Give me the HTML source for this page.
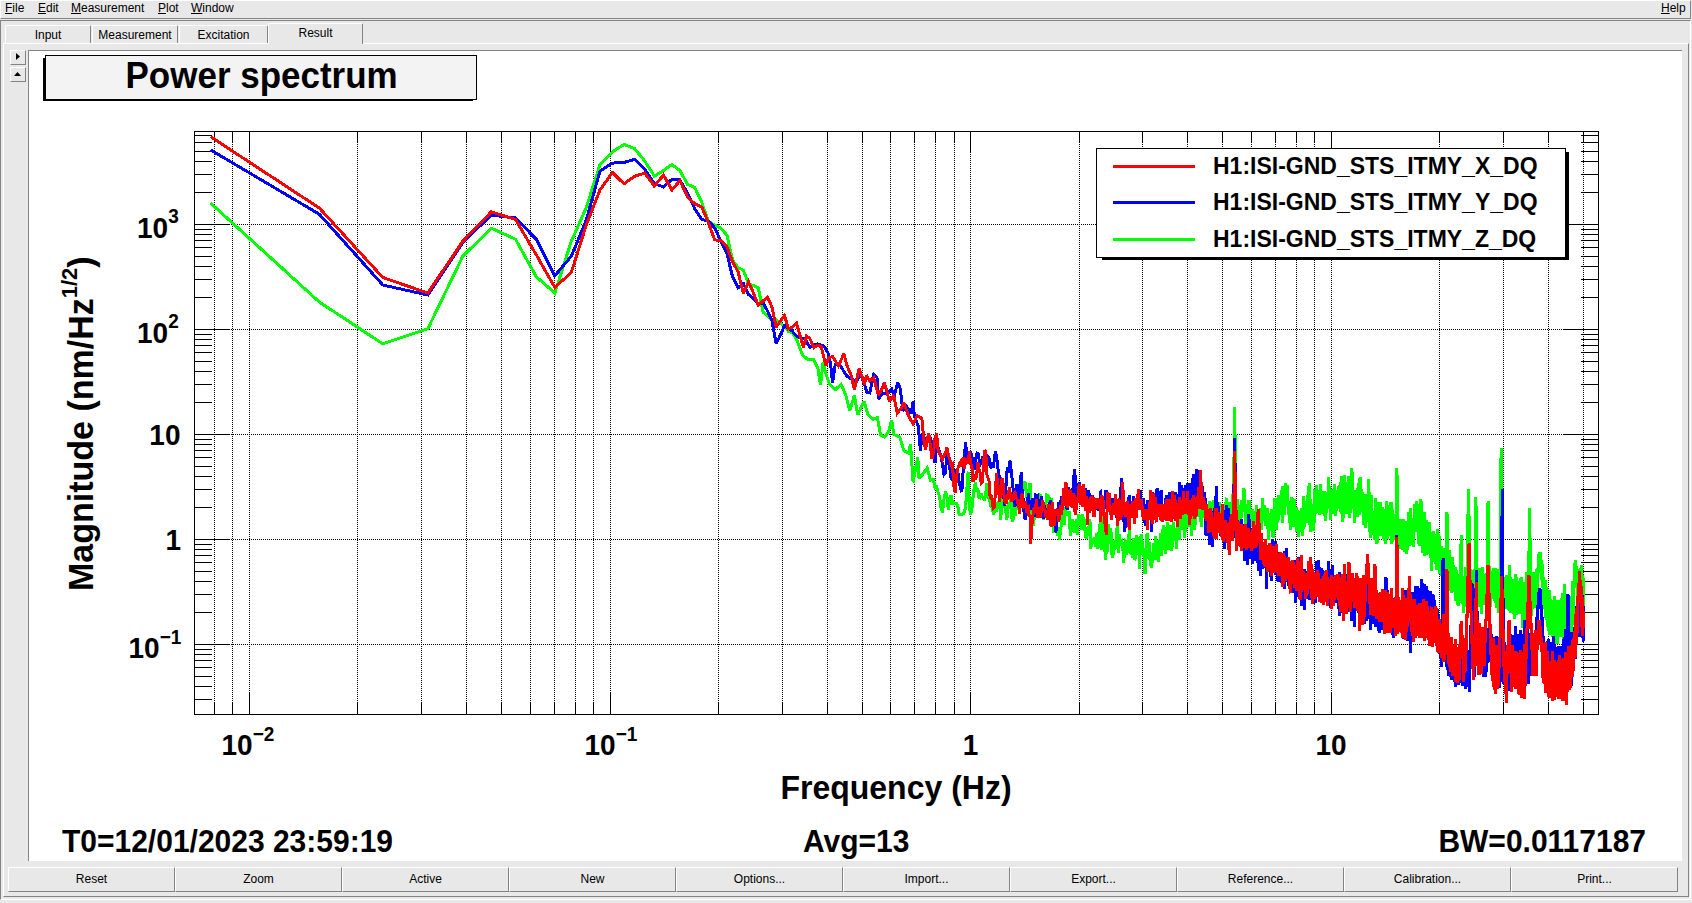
<!DOCTYPE html>
<html><head><meta charset="utf-8"><title>diaggui - Power spectrum</title>
<style>
html,body{margin:0;padding:0;}
body{width:1692px;height:903px;position:relative;overflow:hidden;background:#e8e8e8;font-family:"Liberation Sans",sans-serif;font-size:12px;color:#000;}
.abs{position:absolute;box-sizing:border-box;}
.raised{border-top:1px solid #ffffff;border-left:1px solid #ffffff;border-bottom:1px solid #848484;border-right:1px solid #848484;}
.sunken{border-top:1px solid #848484;border-left:1px solid #848484;border-bottom:1px solid #ffffff;border-right:1px solid #ffffff;}
.menu span{position:absolute;top:0px;line-height:14px;white-space:pre;}
.menu u{text-decoration:underline;text-underline-offset:0.6px;text-decoration-thickness:1px;}
.tab{position:absolute;box-sizing:border-box;border-top:1px solid #ffffff;border-left:1px solid #ffffff;border-right:1px solid #848484;text-align:center;white-space:pre;border-radius:2px 2px 0 0;}
.btn{position:absolute;box-sizing:border-box;top:867px;height:25px;width:167px;text-align:center;line-height:23px;white-space:pre;}
svg text{font-family:"Liberation Sans",sans-serif;font-weight:bold;fill:#000;}
</style></head>
<body>
<div class="abs raised menu" style="left:0;top:0;width:1691px;height:19px;"><span style="left:4px"><u>F</u>ile</span><span style="left:37px"><u>E</u>dit</span><span style="left:70px"><u>M</u>easurement</span><span style="left:157px"><u>P</u>lot</span><span style="left:190px"><u>W</u>indow</span><span style="left:1660px"><u>H</u>elp</span></div>
<div class="abs sunken" style="left:0;top:20px;width:1691px;height:880px;"></div>
<div class="abs raised" style="left:3px;top:43px;width:1686px;height:854px;"></div>
<div class="tab" style="left:5px;top:25px;width:86px;height:18px;line-height:19px;">Input</div><div class="tab" style="left:92px;top:25px;width:86px;height:18px;line-height:19px;">Measurement</div><div class="tab" style="left:179px;top:25px;width:89px;height:18px;line-height:19px;">Excitation</div><div class="tab" style="left:268px;top:23px;width:95px;height:21px;line-height:19px;background:#e8e8e8;">Result</div>
<div class="abs raised" style="left:10px;top:50px;width:16px;height:15px;"><svg width="14" height="12" style="position:absolute;left:0;top:0"><path d="M5 2v7l4-3.5z" fill="#000"/></svg></div>
<div class="abs raised" style="left:10px;top:67px;width:16px;height:15px;"><svg width="14" height="12" style="position:absolute;left:0;top:0"><path d="M3 8h7l-3.5-4z" fill="#000"/></svg></div>
<div class="abs" style="left:28px;top:50px;width:1654px;height:811px;background:#fff;border-top:1px solid #848484;border-left:1px solid #848484;"></div>
<div class="btn raised" style="left:8px">Reset</div><div class="btn raised" style="left:175px">Zoom</div><div class="btn raised" style="left:342px">Active</div><div class="btn raised" style="left:509px">New</div><div class="btn raised" style="left:676px">Options...</div><div class="btn raised" style="left:843px">Import...</div><div class="btn raised" style="left:1010px">Export...</div><div class="btn raised" style="left:1177px">Reference...</div><div class="btn raised" style="left:1344px">Calibration...</div><div class="btn raised" style="left:1511px">Print...</div>
<svg class="abs" style="left:0;top:0" width="1692" height="903" viewBox="0 0 1692 903">
<g shape-rendering="crispEdges">
<rect x="43" y="58" width="430" height="43" fill="#000"/><rect x="45.5" y="55.5" width="431" height="44" fill="#f3f3f3" stroke="#000" stroke-width="1"/>
<path d="M214.5 132V714M232.5 132V714M249.5 132V714M357.5 132V714M421.5 132V714M466.5 132V714M501.5 132V714M530.5 132V714M554.5 132V714M575.5 132V714M593.5 132V714M610.5 132V714M718.5 132V714M782.5 132V714M827.5 132V714M862.5 132V714M890.5 132V714M914.5 132V714M935.5 132V714M954.5 132V714M970.5 132V714M1079.5 132V714M1142.5 132V714M1187.5 132V714M1222.5 132V714M1251.5 132V714M1275.5 132V714M1296.5 132V714M1314.5 132V714M1331.5 132V714M1439.5 132V714M1503.5 132V714M1548.5 132V714M1583.5 132V714M195 644.5H1598M195 539.5H1598M195 434.5H1598M195 329.5H1598M195 224.5H1598" stroke="#000" stroke-width="1" stroke-dasharray="1 1" fill="none"/>
<path d="M214.5 714v-11M214.5 132v11M232.5 714v-11M232.5 132v11M249.5 714v-21M249.5 132v21M357.5 714v-11M357.5 132v11M421.5 714v-11M421.5 132v11M466.5 714v-11M466.5 132v11M501.5 714v-11M501.5 132v11M530.5 714v-11M530.5 132v11M554.5 714v-11M554.5 132v11M575.5 714v-11M575.5 132v11M593.5 714v-11M593.5 132v11M610.5 714v-21M610.5 132v21M718.5 714v-11M718.5 132v11M782.5 714v-11M782.5 132v11M827.5 714v-11M827.5 132v11M862.5 714v-11M862.5 132v11M890.5 714v-11M890.5 132v11M914.5 714v-11M914.5 132v11M935.5 714v-11M935.5 132v11M954.5 714v-11M954.5 132v11M970.5 714v-21M970.5 132v21M1079.5 714v-11M1079.5 132v11M1142.5 714v-11M1142.5 132v11M1187.5 714v-11M1187.5 132v11M1222.5 714v-11M1222.5 132v11M1251.5 714v-11M1251.5 132v11M1275.5 714v-11M1275.5 132v11M1296.5 714v-11M1296.5 132v11M1314.5 714v-11M1314.5 132v11M1331.5 714v-21M1331.5 132v21M1439.5 714v-11M1439.5 132v11M1503.5 714v-11M1503.5 132v11M1548.5 714v-11M1548.5 132v11M1583.5 714v-11M1583.5 132v11M195 699.5h17M1598 699.5h-17M195 686.5h17M1598 686.5h-17M195 676.5h17M1598 676.5h-17M195 667.5h17M1598 667.5h-17M195 660.5h17M1598 660.5h-17M195 654.5h17M1598 654.5h-17M195 649.5h17M1598 649.5h-17M195 644.5h35M1598 644.5h-35M195 612.5h17M1598 612.5h-17M195 594.5h17M1598 594.5h-17M195 581.5h17M1598 581.5h-17M195 571.5h17M1598 571.5h-17M195 562.5h17M1598 562.5h-17M195 555.5h17M1598 555.5h-17M195 549.5h17M1598 549.5h-17M195 544.5h17M1598 544.5h-17M195 539.5h35M1598 539.5h-35M195 507.5h17M1598 507.5h-17M195 489.5h17M1598 489.5h-17M195 476.5h17M1598 476.5h-17M195 466.5h17M1598 466.5h-17M195 457.5h17M1598 457.5h-17M195 450.5h17M1598 450.5h-17M195 444.5h17M1598 444.5h-17M195 439.5h17M1598 439.5h-17M195 434.5h35M1598 434.5h-35M195 402.5h17M1598 402.5h-17M195 384.5h17M1598 384.5h-17M195 371.5h17M1598 371.5h-17M195 361.5h17M1598 361.5h-17M195 352.5h17M1598 352.5h-17M195 345.5h17M1598 345.5h-17M195 339.5h17M1598 339.5h-17M195 334.5h17M1598 334.5h-17M195 329.5h35M1598 329.5h-35M195 297.5h17M1598 297.5h-17M195 279.5h17M1598 279.5h-17M195 266.5h17M1598 266.5h-17M195 256.5h17M1598 256.5h-17M195 247.5h17M1598 247.5h-17M195 240.5h17M1598 240.5h-17M195 234.5h17M1598 234.5h-17M195 229.5h17M1598 229.5h-17M195 224.5h35M1598 224.5h-35M195 192.5h17M1598 192.5h-17M195 174.5h17M1598 174.5h-17M195 161.5h17M1598 161.5h-17M195 151.5h17M1598 151.5h-17M195 142.5h17M1598 142.5h-17M195 135.5h17M1598 135.5h-17" stroke="#000" stroke-width="1" fill="none"/>
<rect x="194.5" y="131.5" width="1404" height="583" fill="none" stroke="#000" stroke-width="1"/>
<polyline points="210.7,203.2 319.3,302.0 382.8,343.8 427.8,328.8 462.8,256.2 491.3,228.2 515.5,239.2 536.4,276.8 554.8,293.0 571.3,241.2 586.3,207.5 599.9,165.0 612.4,151.9 624.0,144.4 634.8,148.8 644.9,161.2 654.4,176.2 663.4,170.6 671.9,164.4 679.9,170.6 687.5,184.4 694.8,187.5 701.8,202.5 708.4,221.5 714.8,225.0 721.0,228.4 726.9,235.1 732.6,260.2 738.1,267.7 743.4,270.2 748.5,283.6 753.5,285.5 758.3,287.8 763.0,312.0 767.5,316.0 771.9,319.6 776.2,319.6 780.4,323.0 784.5,327.0 788.4,331.3 792.3,333.0 796.6,339.2 802.6,355.2 807.3,359.1 813.9,359.8 817.9,368.4 820.5,385.0 823.2,361.8 825.9,373.7 829.2,383.7 835.2,389.7 841.1,384.4 845.8,395.0 849.8,410.9 854.4,395.0 857.7,414.9 864.0,401.3 868.0,414.6 873.3,419.3 877.3,417.3 880.6,435.2 884.6,437.2 888.6,431.9 891.6,419.9 893.9,434.5 899.8,437.2 903.8,450.5 908.5,453.1 910.5,443.8 913.1,482.3 917.8,457.1 919.0,478.4 920.6,476.4 922.2,474.9 923.9,472.2 925.5,470.4 927.2,467.8 928.8,473.7 930.4,480.1 931.9,479.9 933.5,479.7 935.0,488.0 936.6,487.1 938.1,492.1 939.6,496.8 941.1,508.2 942.5,512.7 944.0,499.0 945.4,491.8 946.9,495.4 948.3,510.0 949.7,499.6 951.1,495.1 952.5,503.3 953.8,502.8 955.2,503.5 956.5,503.5 957.9,506.9 959.2,514.5 960.5,514.4 961.8,514.4 963.1,514.0 964.4,511.7 965.6,507.4 966.9,488.8 968.1,471.6 969.4,506.2 970.6,514.4 971.8,510.0 973.0,497.7 974.2,487.6 975.4,482.2 976.6,491.7 977.8,488.5 978.9,497.3 980.1,497.9 981.2,493.5 982.4,497.0 983.5,498.2 984.6,500.6 985.7,494.5 986.9,483.2 988.0,497.4 989.0,497.4 990.1,502.3 991.2,508.0 992.3,503.5 993.3,514.9 994.4,511.6 995.4,506.7 996.5,511.3 997.5,503.7 998.5,502.2 999.6,501.2 1000.6,519.5 1001.6,508.4 1002.6,497.7 1003.6,504.1 1004.6,506.5 1005.5,506.7 1006.5,519.7 1007.5,516.3 1008.5,502.7 1009.4,506.4 1010.4,498.9 1011.3,512.5 1012.3,521.3 1013.2,519.5 1014.1,499.6 1015.0,516.1 1016.0,507.5 1016.9,509.9 1017.8,500.8 1018.7,504.9 1019.6,507.7 1020.5,502.9 1021.4,503.7 1022.2,495.5 1023.1,489.8 1024.0,485.4 1024.9,481.3 1025.7,488.9 1026.6,491.0 1027.4,503.7 1028.3,498.3 1029.1,500.8 1030.0,482.8 1030.8,500.8 1031.6,510.5 1032.5,520.3 1033.3,525.5 1034.1,517.9 1034.9,519.2 1035.7,504.7 1036.5,501.3 1037.3,510.9 1038.1,509.1 1038.9,508.6 1039.7,494.9 1040.5,495.3 1041.3,499.6 1042.0,499.7 1042.8,509.9 1043.6,520.1 1044.4,506.9 1045.1,513.1 1045.9,504.5 1046.6,494.8 1047.4,495.2 1048.1,497.6 1048.9,494.8 1049.6,510.0 1050.4,515.2 1051.1,498.6 1051.8,505.5 1052.5,509.1 1053.3,528.1 1054.0,532.4 1054.7,525.0 1055.4,520.3 1056.1,517.0 1056.8,523.0 1057.5,535.9 1058.2,531.9 1058.9,531.0 1059.6,539.8 1060.3,531.2 1061.0,527.0 1061.7,517.9 1062.4,510.1 1063.1,519.5 1063.7,521.6 1064.4,525.1 1065.1,509.4 1065.7,507.3 1066.4,515.8 1067.1,512.5 1067.7,513.1 1068.4,515.2 1069.0,510.9 1069.7,520.8 1070.3,535.7 1071.0,525.7 1071.6,520.3 1072.3,522.4 1072.9,519.6 1073.5,528.8 1074.2,532.9 1074.8,523.1 1075.4,523.2 1076.1,527.0 1076.7,519.3 1077.3,534.8 1077.9,523.2 1078.5,514.6 1079.2,525.9 1079.8,520.2 1080.4,515.4 1081.0,519.3 1081.6,528.4 1082.2,528.5 1082.8,514.4 1083.4,521.1 1084.0,518.7 1084.6,524.9 1085.2,533.7 1085.7,536.1 1086.3,538.6 1086.9,526.9 1087.5,532.0 1088.1,536.0 1088.6,528.9 1089.2,524.3 1089.8,519.4 1090.4,526.9 1090.9,548.8 1091.5,538.9 1092.1,540.2 1092.6,542.2 1093.2,539.3 1093.7,542.5 1094.3,542.8 1094.9,537.1 1095.4,546.9 1096.0,540.7 1096.5,533.3 1097.1,535.7 1097.6,547.7 1098.1,548.4 1098.7,533.4 1099.2,533.5 1099.8,525.9 1100.3,522.6 1100.8,531.5 1101.4,541.9 1101.9,549.9 1102.4,531.1 1102.9,522.0 1103.5,516.6 1104.0,525.6 1104.5,543.8 1105.0,551.5 1105.5,559.8 1106.1,553.3 1106.6,544.6 1107.1,550.4 1107.6,551.7 1108.1,528.6 1108.6,524.3 1109.1,542.3 1109.6,543.6 1110.1,528.3 1110.6,532.9 1111.1,533.3 1111.6,546.4 1112.1,557.4 1112.6,556.7 1113.1,554.9 1113.6,541.8 1114.1,539.9 1114.6,549.5 1115.1,541.9 1115.6,545.2 1116.0,547.2 1116.5,532.1 1117.1,527.2 1117.3,527.2 1117.7,549.2 1117.9,548.4 1118.4,552.4 1118.9,547.0 1119.4,533.7 1119.9,542.3 1120.3,540.6 1120.8,540.7 1121.3,540.4 1121.7,544.9 1122.2,546.4 1122.7,541.6 1123.1,553.8 1123.6,562.7 1124.1,552.6 1124.3,557.5 1124.7,547.7 1124.9,547.7 1125.4,540.9 1125.9,541.4 1126.3,554.6 1126.8,546.6 1127.2,542.4 1127.7,552.9 1128.1,547.6 1128.6,544.7 1129.1,531.7 1129.3,531.7 1129.7,544.0 1129.9,544.0 1130.4,552.5 1130.8,553.5 1131.2,549.2 1131.7,546.7 1132.1,556.7 1132.3,556.7 1132.7,542.3 1132.9,542.3 1133.4,537.7 1133.8,553.7 1134.3,560.2 1134.7,558.6 1135.1,548.8 1135.3,548.8 1135.7,558.8 1135.9,550.9 1136.4,534.8 1136.8,545.4 1137.3,547.6 1137.7,551.5 1138.1,540.9 1138.3,537.2 1138.7,550.7 1138.9,550.7 1139.4,568.9 1139.8,552.0 1140.2,543.6 1140.6,539.5 1141.1,535.3 1141.3,535.3 1141.7,553.0 1141.9,553.0 1142.2,541.7 1142.6,543.5 1143.1,549.2 1143.3,549.2 1143.7,556.6 1143.9,553.2 1144.3,554.9 1144.7,572.6 1145.1,572.8 1145.3,572.8 1145.7,549.3 1145.9,549.3 1146.3,548.9 1146.7,535.4 1147.1,534.5 1147.3,534.5 1147.7,553.9 1147.9,553.9 1148.3,558.4 1148.7,551.0 1149.1,543.3 1149.3,543.3 1149.7,556.1 1149.9,556.1 1150.1,562.3 1150.3,562.3 1150.7,565.6 1150.9,564.9 1151.4,567.9 1151.8,561.9 1152.1,558.2 1152.3,563.1 1152.7,555.4 1152.9,555.4 1153.3,543.1 1153.7,556.9 1154.1,557.0 1154.3,557.0 1154.7,547.8 1154.9,554.1 1155.1,548.4 1155.3,559.7 1155.7,537.9 1155.9,537.9 1156.3,546.8 1156.7,544.6 1157.1,546.8 1157.3,546.8 1157.7,558.2 1157.9,558.2 1158.1,560.1 1158.3,560.1 1158.7,541.8 1158.9,541.8 1159.3,542.9 1159.6,544.5 1160.1,542.1 1160.3,532.8 1160.7,551.8 1160.9,551.8 1161.1,554.3 1161.3,554.3 1161.7,549.1 1161.9,549.1 1162.1,537.8 1162.3,537.8 1162.7,532.7 1162.9,532.7 1163.1,526.9 1163.3,526.9 1163.7,537.8 1163.9,537.8 1164.3,540.5 1164.7,540.6 1165.1,552.7 1165.3,552.7 1165.7,540.0 1165.9,540.8 1166.1,538.5 1166.3,538.5 1166.7,528.3 1166.9,533.8 1167.1,523.2 1167.3,523.2 1167.7,529.5 1167.9,529.5 1168.1,532.4 1168.3,532.4 1168.7,548.6 1168.9,548.6 1169.1,542.4 1169.3,542.4 1169.7,530.4 1169.9,530.4 1170.1,526.7 1170.3,526.7 1170.7,531.3 1170.9,526.8 1171.1,535.3 1171.3,535.3 1171.7,549.0 1171.9,549.0 1172.1,544.7 1172.3,544.7 1172.7,528.5 1172.9,535.4 1173.1,534.6 1173.3,534.6 1173.7,523.1 1173.9,523.1 1174.1,532.8 1174.3,532.8 1174.7,541.3 1174.9,533.8 1175.1,532.6 1175.3,541.2 1175.7,531.6 1175.9,531.6 1176.1,532.7 1176.3,532.7 1176.7,547.6 1176.9,547.6 1177.1,532.7 1177.3,532.7 1177.7,521.3 1177.9,521.3 1178.1,518.7 1178.3,518.7 1178.7,535.4 1178.9,535.4 1179.1,538.4 1179.3,538.4 1179.7,522.2 1179.9,522.9 1180.1,527.7 1180.3,527.7 1180.7,516.4 1180.9,516.4 1181.1,509.2 1181.3,507.9 1181.7,521.7 1181.9,521.7 1182.1,526.4 1182.3,525.7 1182.7,528.0 1182.9,528.0 1183.1,521.7 1183.3,507.9 1183.7,527.7 1183.9,527.7 1184.1,518.9 1184.3,518.9 1184.7,536.4 1184.9,536.4 1185.1,528.0 1185.3,528.0 1185.7,525.1 1185.9,525.1 1186.1,526.0 1186.3,526.0 1186.7,509.1 1186.9,509.1 1187.1,512.6 1187.3,507.6 1187.7,520.5 1187.9,520.5 1188.1,524.8 1188.3,526.8 1188.7,508.5 1188.9,508.5 1189.1,517.8 1189.3,517.8 1189.7,513.0 1189.9,513.0 1190.1,508.5 1190.3,508.5 1190.7,521.7 1190.9,521.7 1191.1,519.1 1191.3,519.1 1191.7,535.8 1191.9,531.3 1192.1,523.4 1192.3,524.9 1192.7,512.1 1192.9,512.1 1193.1,509.1 1193.3,509.1 1193.7,523.1 1193.9,523.1 1194.1,528.9 1194.3,528.9 1194.7,512.2 1194.9,521.2 1195.1,523.5 1195.3,523.5 1195.7,512.0 1195.9,512.0 1196.1,507.5 1196.3,511.5 1196.7,505.7 1196.9,505.7 1197.1,515.0 1197.3,515.0 1197.7,502.1 1197.9,502.1 1198.1,514.5 1198.3,514.5 1198.7,503.4 1198.9,506.4 1199.1,506.6 1199.3,506.6 1199.7,503.2 1199.9,503.2 1200.1,512.4 1200.3,512.4 1200.7,520.9 1200.9,520.9 1201.1,521.8 1201.3,526.9 1201.7,519.2 1201.9,519.2 1202.1,512.0 1202.3,516.2 1202.7,502.9 1202.9,502.9 1203.1,506.5 1203.3,506.5 1203.7,516.1 1203.9,516.1 1204.1,505.8 1204.3,505.8 1204.7,511.9 1204.9,509.4 1205.1,504.2 1205.3,504.2 1205.7,530.2 1205.9,530.2 1206.1,524.3 1206.3,517.5 1206.7,527.5 1206.9,518.7 1207.1,515.5 1207.3,515.5 1207.7,522.1 1207.9,519.0 1208.1,513.0 1208.3,513.0 1208.7,507.5 1208.9,507.5 1209.1,504.0 1209.3,506.5 1209.7,502.0 1209.9,502.0 1210.1,507.1 1210.3,507.1 1210.7,524.8 1210.9,516.3 1211.1,507.7 1211.3,507.7 1211.7,516.2 1211.9,516.2 1212.1,520.9 1212.3,520.9 1212.7,502.2 1212.9,504.6 1213.1,512.4 1213.3,522.1 1213.7,501.3 1213.9,501.3 1214.1,505.7 1214.3,511.4 1214.7,503.5 1214.9,503.6 1215.1,499.3 1215.3,499.3 1215.7,528.4 1215.9,528.4 1216.1,513.1 1216.3,513.1 1216.7,526.3 1216.9,525.4 1217.1,522.6 1217.3,522.6 1217.7,506.2 1217.9,506.2 1218.1,511.8 1218.3,511.8 1218.7,522.3 1218.9,522.3 1219.1,522.7 1219.3,522.7 1219.7,503.6 1219.9,503.6 1220.1,508.6 1220.3,516.6 1220.7,505.1 1220.9,505.1 1221.1,509.6 1221.3,508.2 1221.7,521.7 1221.9,520.9 1222.1,515.8 1222.3,515.8 1222.7,522.8 1222.9,522.8 1223.1,514.8 1223.3,514.8 1223.7,523.6 1223.9,515.0 1224.1,509.6 1224.3,509.6 1224.7,518.4 1224.9,515.0 1225.1,516.6 1225.3,527.2 1225.7,505.6 1225.9,505.6 1226.1,499.8 1226.3,497.6 1226.7,515.1 1226.9,505.4 1227.1,503.7 1227.3,503.7 1227.7,529.1 1227.9,529.1 1228.1,529.7 1228.3,529.7 1228.7,513.9 1228.9,513.9 1229.1,503.7 1229.3,523.5 1229.7,503.3 1229.9,503.3 1230.1,508.4 1230.3,508.4 1230.7,523.5 1230.9,523.5 1231.1,520.0 1231.3,520.0 1231.7,509.2 1231.9,509.2 1232.1,498.9 1232.3,494.3 1232.7,515.1 1232.9,515.1 1233.1,518.2 1233.3,518.2 1233.7,467.4 1233.9,467.4 1234.1,450.5 1234.3,450.5 1234.7,407.3 1234.9,423.1 1235.1,443.7 1235.3,443.7 1235.7,501.0 1235.9,501.0 1236.1,533.8 1236.3,533.8 1236.7,505.1 1236.9,517.4 1237.1,513.6 1237.3,498.8 1237.7,515.1 1237.9,515.1 1238.1,520.9 1238.3,522.4 1238.7,507.8 1238.9,521.8 1239.1,506.1 1239.3,506.1 1239.7,518.6 1239.9,514.6 1240.1,522.0 1240.3,522.8 1240.7,512.1 1240.9,512.1 1241.1,501.9 1241.3,501.9 1241.7,518.4 1241.9,512.2 1242.1,505.2 1242.3,504.5 1242.7,512.1 1242.9,507.0 1243.1,506.8 1243.3,506.8 1243.7,489.0 1243.9,489.0 1244.1,490.9 1244.3,490.9 1244.7,505.7 1244.9,505.7 1245.1,508.8 1245.3,508.0 1245.7,522.5 1245.9,522.5 1246.1,521.5 1246.3,524.3 1246.7,504.2 1246.9,514.3 1247.1,531.2 1247.3,531.2 1247.7,515.4 1247.9,521.2 1248.1,520.9 1248.3,524.8 1248.7,501.0 1248.9,501.0 1249.1,505.8 1249.3,499.9 1249.7,520.2 1249.9,520.2 1250.1,521.7 1250.3,521.7 1250.7,510.7 1250.9,513.0 1251.1,517.1 1251.3,513.8 1251.7,521.4 1251.9,517.2 1252.1,510.8 1252.3,510.8 1252.7,527.1 1252.9,514.2 1253.1,521.4 1253.3,520.3 1253.7,523.4 1253.9,523.4 1254.1,515.1 1254.3,510.8 1254.7,529.4 1254.9,529.4 1255.1,528.2 1255.3,528.2 1255.7,512.2 1255.9,517.5 1256.1,512.8 1256.3,505.2 1256.7,515.6 1256.9,515.6 1257.1,519.5 1257.3,537.7 1257.7,516.2 1257.9,516.2 1258.1,521.6 1258.3,523.8 1258.7,510.5 1258.9,510.9 1259.1,534.7 1259.3,534.7 1259.7,510.9 1259.9,510.9 1260.1,514.7 1260.3,507.9 1260.7,525.4 1260.9,525.4 1261.1,528.1 1261.3,528.1 1261.7,510.0 1261.9,513.3 1262.1,512.7 1262.3,520.0 1262.7,497.7 1262.9,515.1 1263.1,514.6 1263.3,520.7 1263.7,505.4 1263.9,507.3 1264.1,517.1 1264.3,517.1 1264.7,504.8 1264.9,513.1 1265.1,524.8 1265.3,524.8 1265.7,515.0 1265.9,519.8 1266.1,515.5 1266.3,514.7 1266.7,522.1 1266.9,522.1 1267.1,527.3 1267.3,527.3 1267.7,508.1 1267.9,524.2 1268.1,529.9 1268.3,539.8 1268.7,518.6 1268.9,518.6 1269.1,521.3 1269.3,521.3 1269.7,515.2 1269.9,515.2 1270.1,514.2 1270.3,514.2 1270.7,527.6 1270.9,523.1 1271.1,527.6 1271.3,530.9 1271.7,509.1 1271.9,522.6 1272.1,532.8 1272.3,536.8 1272.7,516.3 1272.9,529.0 1273.1,536.7 1273.3,536.7 1273.7,524.8 1273.9,530.8 1274.1,522.6 1274.3,522.6 1274.7,499.6 1274.9,499.6 1275.1,508.8 1275.3,519.6 1275.7,497.9 1275.9,504.8 1276.1,521.5 1276.3,516.0 1276.7,530.2 1276.9,519.5 1277.1,521.8 1277.3,521.8 1277.7,500.3 1277.9,515.1 1278.1,506.3 1278.3,520.1 1278.7,494.9 1278.9,499.1 1279.1,513.5 1279.3,513.5 1279.7,504.1 1279.9,508.8 1280.1,504.7 1280.3,499.8 1280.7,511.0 1280.9,501.0 1281.1,501.8 1281.3,504.2 1281.7,492.9 1281.9,495.6 1282.1,487.2 1282.3,487.2 1282.7,522.6 1282.9,502.0 1283.1,496.7 1283.3,492.8 1283.7,508.0 1283.9,508.0 1284.1,507.3 1284.3,514.8 1284.7,499.3 1284.9,499.3 1285.1,498.1 1285.3,498.1 1285.7,483.0 1285.9,485.8 1286.1,488.3 1286.3,488.3 1286.7,505.5 1286.9,505.5 1287.1,496.4 1287.3,485.4 1287.7,499.1 1287.9,499.1 1288.1,510.0 1288.3,514.5 1288.7,506.9 1288.9,509.7 1289.1,517.3 1289.3,502.3 1289.7,517.5 1289.9,517.5 1290.1,528.3 1290.3,528.3 1290.7,504.8 1290.9,504.8 1291.1,498.0 1291.3,498.0 1291.7,518.0 1291.9,518.0 1292.1,499.2 1292.3,499.2 1292.7,513.1 1292.9,513.1 1293.1,502.6 1293.3,526.5 1293.7,501.3 1293.9,501.3 1294.1,506.6 1294.3,522.7 1294.7,500.7 1294.9,500.7 1295.1,520.1 1295.3,524.7 1295.7,508.8 1295.9,508.8 1296.1,508.6 1296.3,508.6 1296.7,530.5 1296.9,530.5 1297.1,526.5 1297.3,526.5 1297.7,511.1 1297.9,511.1 1298.1,512.9 1298.3,512.9 1298.7,537.4 1298.9,527.5 1299.1,523.9 1299.3,517.3 1299.7,529.1 1299.9,523.8 1300.1,517.6 1300.3,513.9 1300.7,526.4 1300.9,519.8 1301.1,509.4 1301.3,509.4 1301.7,530.9 1301.9,530.9 1302.1,531.2 1302.3,536.0 1302.7,513.5 1302.9,520.4 1303.1,527.4 1303.3,527.4 1303.7,497.8 1303.9,497.8 1304.1,513.0 1304.3,526.7 1304.7,500.9 1304.9,516.0 1305.1,503.2 1305.3,503.2 1305.7,521.5 1305.9,517.5 1306.1,515.5 1306.3,522.8 1306.7,508.5 1306.9,508.6 1307.1,507.9 1307.3,519.9 1307.7,496.2 1307.9,496.2 1308.1,501.3 1308.3,512.7 1308.7,487.9 1308.9,487.9 1309.1,484.4 1309.3,484.4 1309.7,524.5 1309.9,518.5 1310.1,510.6 1310.3,532.2 1310.7,499.0 1310.9,508.4 1311.1,519.4 1311.3,526.5 1311.7,504.0 1311.9,508.1 1312.1,508.5 1312.3,507.5 1312.7,518.3 1312.9,518.3 1313.1,518.2 1313.3,506.6 1313.7,529.0 1313.9,529.0 1314.1,519.1 1314.3,489.1 1314.7,520.6 1314.9,520.6 1315.1,503.3 1315.3,514.2 1315.7,489.0 1315.9,507.7 1316.1,505.4 1316.3,485.5 1316.7,510.5 1316.9,502.8 1317.1,504.2 1317.3,505.6 1317.7,496.0 1317.9,501.4 1318.1,496.7 1318.3,513.1 1318.7,489.6 1318.9,497.1 1319.1,503.3 1319.3,492.1 1319.7,513.1 1319.9,513.1 1320.1,496.8 1320.3,483.8 1320.7,513.7 1320.9,504.5 1321.1,506.9 1321.3,510.7 1321.7,494.2 1321.9,495.9 1322.1,494.3 1322.3,494.3 1322.7,508.4 1322.9,508.4 1323.1,512.4 1323.3,512.4 1323.7,491.0 1323.9,506.7 1324.1,507.1 1324.3,516.3 1324.7,491.3 1324.9,493.8 1325.1,493.6 1325.3,492.2 1325.7,521.3 1325.9,503.9 1326.1,496.3 1326.3,496.3 1326.7,511.0 1326.9,511.0 1327.1,502.3 1327.3,509.4 1327.7,497.1 1327.9,503.7 1328.1,495.6 1328.3,477.4 1328.7,500.0 1328.9,500.0 1329.1,495.5 1329.3,505.8 1329.7,486.0 1329.9,496.1 1330.1,503.7 1330.3,496.9 1330.7,518.0 1330.9,518.0 1331.1,507.7 1331.3,507.7 1331.7,490.8 1331.9,490.8 1332.1,500.2 1332.3,491.1 1332.7,503.5 1332.9,503.5 1333.1,508.3 1333.3,514.0 1333.7,490.2 1333.9,503.4 1334.1,512.1 1334.3,512.5 1334.7,485.7 1334.9,485.7 1335.1,498.8 1335.3,515.6 1335.7,491.1 1335.9,491.1 1336.1,502.8 1336.3,490.2 1336.7,510.8 1336.9,506.0 1337.1,506.1 1337.3,491.0 1337.7,509.2 1337.9,498.9 1338.1,498.3 1338.3,505.5 1338.7,487.5 1338.9,487.5 1339.1,486.5 1339.3,486.5 1339.7,502.6 1339.9,491.6 1340.1,494.6 1340.3,481.8 1340.7,510.2 1340.9,510.2 1341.1,505.7 1341.3,513.7 1341.7,476.5 1341.9,487.0 1342.1,502.0 1342.3,521.6 1342.7,487.8 1342.9,492.4 1343.1,495.6 1343.3,517.7 1343.7,488.2 1343.9,495.6 1344.1,476.4 1344.3,476.4 1344.7,493.6 1344.9,486.0 1345.1,496.5 1345.3,505.7 1345.7,487.3 1345.9,493.1 1346.1,487.2 1346.3,514.2 1346.7,482.4 1346.9,495.0 1347.1,492.7 1347.3,487.6 1347.7,502.7 1347.9,495.8 1348.1,499.1 1348.3,476.3 1348.7,503.2 1348.9,503.2 1349.1,516.5 1349.3,516.5 1349.7,486.6 1349.9,497.2 1350.1,488.0 1350.3,478.5 1350.7,511.5 1350.9,511.5 1351.1,503.9 1351.3,503.9 1351.7,469.9 1351.9,469.9 1352.1,474.3 1352.3,474.3 1352.7,505.2 1352.9,490.1 1353.1,496.8 1353.3,508.9 1353.7,495.6 1353.9,500.1 1354.1,514.8 1354.3,522.9 1354.7,501.4 1354.9,501.4 1355.1,491.4 1355.3,491.4 1355.7,503.2 1355.9,502.5 1356.1,504.2 1356.3,494.6 1356.7,507.7 1356.9,507.7 1357.1,515.6 1357.3,515.6 1357.7,488.2 1357.9,494.3 1358.1,484.6 1358.3,484.6 1358.7,513.1 1358.9,489.4 1359.1,490.2 1359.3,514.7 1359.7,479.3 1359.9,479.3 1360.1,498.5 1360.3,509.2 1360.7,476.7 1360.9,485.5 1361.1,495.4 1361.3,510.7 1361.7,489.4 1361.9,506.5 1362.1,502.4 1362.3,492.2 1362.7,512.2 1362.9,499.5 1363.1,500.4 1363.3,500.4 1363.7,523.0 1363.9,523.0 1364.1,517.5 1364.3,517.5 1364.7,494.0 1364.9,498.5 1365.1,508.0 1365.3,508.0 1365.7,527.8 1365.9,513.1 1366.1,511.1 1366.3,498.0 1366.7,522.3 1366.9,512.6 1367.1,506.0 1367.3,510.0 1367.7,498.1 1367.9,498.1 1368.1,491.6 1368.3,491.6 1368.7,479.0 1368.9,490.1 1369.1,493.4 1369.3,492.9 1369.7,532.1 1369.9,529.2 1370.1,522.1 1370.3,538.3 1370.7,516.2 1370.9,529.6 1371.1,527.0 1371.3,527.8 1371.7,495.5 1371.9,521.3 1372.1,523.0 1372.3,517.1 1372.7,532.8 1372.9,519.0 1373.1,516.7 1373.3,514.8 1373.7,534.8 1373.9,531.4 1374.1,530.7 1374.3,539.7 1374.7,511.0 1374.9,522.9 1375.1,517.5 1375.3,497.7 1375.7,523.3 1375.9,516.3 1376.1,530.1 1376.3,513.6 1376.7,542.3 1376.9,542.3 1377.1,541.8 1377.3,541.8 1377.7,508.1 1377.9,520.9 1378.1,529.5 1378.3,501.8 1378.7,531.6 1378.9,518.0 1379.1,506.6 1379.3,506.6 1379.7,533.2 1379.9,520.9 1380.1,503.3 1380.3,503.3 1380.7,535.7 1380.9,514.5 1381.1,520.7 1381.3,512.2 1381.7,534.9 1381.9,518.6 1382.1,530.0 1382.3,506.6 1382.7,530.5 1382.9,522.2 1383.1,522.2 1383.3,522.2 1383.7,538.5 1383.9,530.0 1384.1,525.1 1384.3,508.8 1384.7,538.8 1384.9,538.8 1385.1,542.1 1385.3,542.1 1385.7,513.8 1385.9,519.6 1386.1,524.5 1386.3,538.6 1386.7,500.9 1386.9,524.8 1387.1,514.9 1387.3,505.3 1387.7,538.8 1387.9,524.0 1388.1,525.6 1388.3,512.3 1388.7,535.3 1388.9,534.2 1389.1,514.4 1389.3,508.0 1389.7,532.0 1389.9,532.0 1390.1,525.1 1390.3,502.0 1390.7,534.8 1390.9,503.1 1391.1,503.6 1391.3,503.6 1391.7,544.3 1391.9,527.6 1392.1,522.1 1392.3,509.1 1392.7,540.1 1392.9,540.1 1393.1,528.1 1393.3,539.2 1393.7,514.0 1393.9,534.0 1394.1,532.2 1394.3,538.4 1394.7,518.2 1394.9,531.1 1395.1,523.3 1395.3,518.6 1395.7,540.2 1395.9,523.4 1396.1,515.7 1396.3,515.7 1396.7,467.9 1396.9,472.0 1397.1,477.0 1397.3,477.0 1397.7,531.4 1397.9,531.4 1398.1,543.8 1398.3,545.7 1398.7,521.9 1398.9,525.7 1399.1,528.1 1399.3,540.4 1399.7,521.1 1399.9,530.2 1400.1,520.5 1400.3,520.5 1400.7,548.9 1400.9,533.3 1401.1,541.1 1401.3,541.1 1401.7,523.2 1401.9,529.4 1402.1,521.2 1402.3,521.2 1402.7,549.7 1402.9,525.6 1403.1,520.6 1403.3,520.6 1403.7,546.2 1403.9,546.2 1404.1,547.6 1404.3,552.0 1404.7,527.4 1404.9,529.0 1405.1,526.9 1405.3,544.5 1405.7,522.7 1405.9,522.7 1406.1,535.4 1406.3,525.8 1406.7,554.3 1406.9,535.2 1407.1,538.1 1407.3,549.9 1407.7,520.7 1407.9,526.9 1408.1,532.4 1408.3,542.6 1408.7,512.4 1408.9,531.0 1409.1,539.8 1409.3,546.2 1409.7,523.1 1409.9,528.4 1410.1,514.2 1410.3,537.3 1410.7,509.0 1410.9,509.0 1411.1,524.3 1411.3,524.0 1411.7,544.7 1411.9,530.8 1412.1,539.4 1412.3,542.9 1412.7,525.5 1412.9,529.2 1413.1,536.6 1413.3,519.5 1413.7,546.9 1413.9,521.8 1414.1,527.5 1414.3,504.0 1414.7,530.0 1414.9,530.0 1415.1,531.1 1415.3,532.2 1415.7,514.2 1415.9,526.5 1416.1,521.2 1416.3,530.5 1416.7,502.2 1416.9,502.2 1417.1,510.1 1417.3,504.0 1417.7,518.8 1417.9,518.8 1418.1,522.4 1418.3,544.4 1418.7,517.0 1418.9,521.7 1419.1,519.3 1419.3,504.6 1419.7,544.5 1419.9,544.5 1420.1,534.3 1420.3,534.3 1420.7,500.7 1420.9,500.7 1421.1,502.6 1421.3,502.6 1421.7,531.2 1421.9,531.2 1422.1,540.1 1422.3,515.4 1422.7,551.0 1422.9,551.0 1423.1,544.2 1423.3,520.3 1423.7,545.2 1423.9,545.2 1424.1,554.3 1424.3,554.3 1424.7,512.0 1424.9,539.0 1425.1,528.9 1425.3,525.1 1425.7,545.5 1425.9,538.3 1426.1,543.2 1426.3,555.2 1426.7,520.4 1426.9,530.3 1427.1,528.1 1427.3,528.1 1427.7,552.3 1427.9,551.4 1428.1,551.4 1428.3,551.4 1428.7,529.6 1428.9,542.2 1429.1,541.6 1429.3,522.0 1429.7,553.6 1429.9,543.2 1430.1,544.6 1430.3,558.0 1430.7,531.6 1430.9,546.8 1431.1,557.9 1431.3,571.3 1431.7,539.4 1431.9,550.0 1432.1,551.6 1432.3,537.6 1432.7,559.0 1432.9,547.5 1433.1,550.5 1433.3,531.0 1433.7,562.3 1433.9,548.5 1434.1,558.3 1434.3,561.8 1434.7,534.1 1434.9,546.3 1435.1,541.8 1435.3,541.8 1435.7,563.6 1435.9,547.1 1436.1,539.1 1436.3,539.1 1436.7,570.3 1436.9,556.2 1437.1,550.1 1437.3,528.6 1437.7,564.3 1437.9,550.8 1438.1,558.1 1438.3,562.3 1438.7,534.4 1438.9,546.2 1439.1,543.6 1439.3,536.5 1439.7,573.9 1439.9,555.9 1440.1,559.5 1440.3,547.9 1440.7,571.5 1440.9,566.9 1441.1,555.2 1441.3,545.8 1441.7,576.4 1441.9,550.2 1442.1,558.8 1442.3,566.9 1442.7,548.4 1442.9,560.9 1443.1,576.1 1443.3,549.6 1443.7,580.3 1443.9,562.0 1444.1,567.0 1444.3,548.6 1444.7,573.4 1444.9,568.1 1445.1,577.3 1445.3,582.5 1445.7,547.7 1445.9,567.5 1446.1,565.1 1446.3,565.1 1446.7,513.0 1446.9,513.0 1447.1,515.3 1447.3,515.3 1447.7,567.7 1447.9,567.7 1448.1,566.3 1448.3,560.9 1448.7,583.3 1448.9,582.2 1449.1,579.2 1449.3,549.7 1449.7,589.7 1449.9,589.7 1450.1,582.0 1450.3,564.7 1450.7,587.2 1450.9,569.8 1451.1,562.1 1451.3,562.1 1451.7,592.7 1451.9,581.2 1452.1,580.3 1452.3,583.7 1452.7,557.5 1452.9,581.7 1453.1,590.1 1453.3,590.1 1453.7,565.1 1453.9,578.3 1454.1,582.8 1454.3,585.6 1454.7,570.6 1454.9,583.2 1455.1,599.0 1455.3,599.0 1455.7,566.6 1455.9,569.7 1456.1,577.9 1456.3,570.5 1456.7,596.9 1456.9,586.6 1457.1,575.4 1457.3,575.4 1457.7,604.7 1457.9,602.6 1458.1,577.7 1458.3,605.5 1458.7,577.3 1458.9,589.4 1459.1,590.3 1459.3,602.6 1459.7,574.2 1459.9,575.9 1460.1,576.3 1460.3,602.0 1460.7,545.4 1460.9,545.4 1461.1,542.6 1461.3,535.0 1461.7,576.6 1461.9,576.6 1462.1,577.0 1462.3,577.0 1462.7,599.5 1462.9,599.5 1463.1,607.2 1463.3,612.5 1463.7,576.5 1463.9,595.6 1464.1,596.0 1464.3,603.6 1464.7,582.3 1464.9,597.6 1465.1,582.4 1465.3,603.1 1465.7,567.4 1465.9,579.8 1466.1,578.4 1466.3,607.3 1466.7,570.2 1466.9,574.2 1467.1,569.4 1467.3,569.4 1467.7,515.7 1467.9,515.7 1468.1,512.8 1468.3,489.5 1468.7,514.5 1468.9,514.5 1469.1,517.3 1469.3,517.3 1469.7,569.0 1469.9,567.0 1470.1,570.9 1470.3,570.9 1470.7,602.3 1470.9,593.9 1471.1,593.9 1471.3,601.3 1471.7,575.3 1471.9,583.6 1472.1,588.2 1472.3,577.7 1472.7,613.5 1472.9,587.4 1473.1,584.0 1473.3,570.1 1473.7,603.8 1473.9,589.4 1474.1,580.8 1474.3,569.0 1474.7,607.7 1474.9,586.4 1475.1,577.1 1475.3,577.1 1475.7,497.5 1475.9,503.4 1476.1,507.9 1476.3,507.9 1476.7,590.6 1476.9,586.2 1477.1,598.2 1477.3,603.5 1477.7,573.4 1477.9,601.2 1478.1,605.5 1478.3,605.5 1478.7,569.8 1478.9,569.8 1479.1,583.9 1479.3,598.5 1479.7,571.8 1479.9,592.0 1480.1,587.1 1480.3,567.9 1480.7,601.3 1480.9,573.8 1481.1,577.6 1481.3,614.4 1481.7,574.7 1481.9,587.1 1482.1,587.0 1482.3,567.5 1482.7,596.6 1482.9,592.3 1483.1,596.3 1483.3,604.9 1483.7,576.0 1483.9,576.0 1484.1,576.0 1484.3,576.0 1484.7,598.3 1484.9,579.3 1485.1,581.1 1485.3,574.4 1485.7,597.8 1485.9,579.2 1486.1,574.0 1486.3,572.8 1486.7,603.7 1486.9,578.1 1487.1,583.2 1487.3,583.2 1487.7,504.7 1487.9,504.7 1488.1,502.0 1488.3,502.0 1488.7,587.5 1488.9,587.5 1489.1,600.3 1489.3,600.3 1489.7,565.8 1489.9,583.9 1490.1,590.4 1490.3,575.6 1490.7,606.6 1490.9,585.5 1491.1,572.0 1491.3,572.0 1491.7,598.5 1491.9,583.5 1492.1,592.9 1492.3,597.6 1492.7,575.1 1492.9,586.0 1493.1,577.1 1493.3,567.9 1493.7,599.3 1493.9,595.8 1494.1,595.6 1494.3,600.7 1494.7,576.2 1494.9,585.2 1495.1,580.1 1495.3,568.1 1495.7,602.9 1495.9,597.6 1496.1,591.1 1496.3,573.5 1496.7,607.9 1496.9,593.5 1497.1,591.9 1497.3,568.7 1497.7,598.0 1497.9,597.3 1498.1,607.9 1498.3,613.4 1498.7,575.2 1498.9,595.8 1499.1,605.8 1499.3,605.8 1499.7,575.9 1499.9,578.0 1500.1,571.3 1500.3,571.3 1500.7,460.8 1500.9,460.8 1501.1,455.9 1501.3,447.8 1501.7,554.1 1501.9,554.1 1502.1,559.1 1502.3,559.1 1502.7,606.3 1502.9,606.3 1503.1,599.2 1503.3,611.4 1503.7,581.9 1503.9,594.1 1504.1,595.4 1504.3,606.0 1504.7,576.6 1504.9,604.1 1505.1,601.5 1505.3,578.2 1505.7,608.7 1505.9,599.2 1506.1,582.8 1506.3,607.1 1506.7,574.7 1506.9,592.4 1507.1,589.3 1507.3,580.4 1507.7,608.6 1507.9,590.6 1508.1,583.2 1508.3,610.1 1508.7,579.8 1508.9,590.7 1509.1,590.8 1509.3,611.1 1509.7,565.4 1509.9,582.6 1510.1,603.0 1510.3,612.6 1510.7,576.9 1510.9,604.7 1511.1,595.7 1511.3,612.0 1511.7,579.6 1511.9,601.3 1512.1,599.3 1512.3,610.4 1512.7,583.2 1512.9,604.3 1513.1,587.7 1513.3,578.9 1513.7,614.0 1513.9,592.3 1514.1,592.6 1514.3,619.2 1514.7,579.2 1514.9,588.9 1515.1,597.2 1515.3,574.2 1515.7,606.9 1515.9,588.0 1516.1,601.4 1516.3,614.5 1516.7,576.6 1516.9,594.1 1517.1,588.0 1517.3,586.5 1517.7,614.4 1517.9,597.4 1518.1,590.3 1518.3,580.9 1518.7,603.2 1518.9,596.8 1519.1,609.3 1519.3,613.7 1519.7,587.5 1519.9,592.1 1520.1,594.5 1520.3,613.3 1520.7,577.8 1520.9,602.7 1521.1,585.8 1521.3,577.3 1521.7,613.8 1521.9,590.7 1522.1,590.3 1522.3,627.5 1522.7,588.9 1522.9,606.1 1523.1,600.6 1523.3,582.4 1523.7,609.7 1523.9,604.2 1524.1,606.5 1524.3,583.8 1524.7,618.3 1524.9,618.3 1525.1,607.6 1525.3,582.6 1525.7,616.2 1525.9,602.2 1526.1,585.5 1526.3,612.3 1526.7,572.2 1526.9,599.3 1527.1,594.5 1527.3,581.9 1527.7,611.0 1527.9,594.2 1528.1,579.6 1528.3,599.5 1528.7,552.4 1528.9,552.4 1529.1,550.0 1529.3,550.0 1529.7,507.7 1529.9,535.6 1530.1,539.0 1530.3,539.0 1530.7,608.5 1530.9,584.1 1531.1,585.8 1531.3,571.6 1531.7,615.9 1531.9,589.8 1532.1,590.4 1532.3,608.9 1532.7,579.1 1532.9,588.7 1533.1,583.8 1533.3,606.9 1533.7,572.9 1533.9,586.4 1534.1,598.7 1534.3,572.3 1534.7,606.4 1534.9,591.1 1535.1,586.9 1535.3,578.1 1535.7,606.7 1535.9,606.7 1536.1,578.6 1536.3,600.7 1536.7,569.3 1536.9,585.6 1537.1,586.6 1537.3,588.3 1537.7,569.9 1537.9,569.9 1538.1,570.7 1538.3,572.5 1538.7,554.4 1538.9,559.0 1539.1,558.5 1539.3,564.0 1539.7,553.2 1539.9,553.2 1540.1,553.0 1540.3,553.0 1540.7,562.5 1540.9,558.5 1541.1,562.0 1541.3,562.0 1541.7,578.1 1541.9,578.1 1542.1,577.5 1542.3,587.9 1542.7,564.0 1542.9,575.9 1543.1,589.7 1543.3,608.5 1543.7,576.9 1543.9,588.8 1544.1,605.4 1544.3,584.8 1544.7,609.1 1544.9,603.5 1545.1,601.8 1545.3,580.0 1545.7,618.2 1545.9,598.0 1546.1,601.6 1546.3,587.2 1546.7,620.4 1546.9,600.6 1547.1,591.1 1547.3,591.1 1547.7,627.1 1547.9,614.2 1548.1,611.1 1548.3,595.9 1548.7,631.2 1548.9,616.3 1549.1,619.6 1549.3,634.9 1549.7,589.9 1549.9,617.4 1550.1,621.0 1550.3,598.7 1550.7,630.4 1550.9,621.0 1551.1,630.4 1551.3,630.4 1551.7,600.0 1551.9,606.9 1552.1,606.6 1552.3,636.8 1552.7,600.1 1552.9,620.0 1553.1,616.2 1553.3,646.1 1553.7,602.8 1553.9,608.4 1554.1,624.3 1554.3,633.0 1554.7,596.2 1554.9,615.2 1555.1,611.1 1555.3,644.0 1555.7,604.1 1555.9,626.2 1556.1,630.7 1556.3,599.8 1556.7,639.2 1556.9,623.7 1557.1,642.4 1557.3,642.4 1557.7,610.9 1557.9,614.6 1558.1,616.9 1558.3,602.0 1558.7,631.6 1558.9,602.7 1559.1,606.0 1559.3,600.1 1559.7,634.0 1559.9,617.7 1560.1,611.9 1560.3,600.3 1560.7,637.4 1560.9,616.4 1561.1,616.3 1561.3,635.6 1561.7,597.9 1561.9,621.1 1562.1,615.3 1562.3,593.2 1562.7,627.1 1562.9,614.3 1563.1,614.4 1563.3,594.8 1563.7,640.0 1563.9,603.7 1564.1,589.3 1564.3,634.1 1564.7,583.6 1564.9,602.6 1565.1,605.2 1565.3,593.8 1565.7,624.3 1565.9,612.8 1566.1,608.3 1566.3,598.9 1566.7,630.8 1566.9,622.2 1567.1,627.6 1567.3,636.3 1567.7,601.9 1567.9,614.1 1568.1,615.7 1568.3,640.1 1568.7,607.1 1568.9,607.1 1569.1,610.0 1569.3,637.4 1569.7,595.8 1569.9,622.3 1570.1,643.0 1570.3,643.0 1570.7,605.5 1570.9,618.4 1571.1,620.0 1571.3,642.4 1571.7,604.8 1571.9,617.5 1572.1,606.2 1572.3,624.7 1572.7,581.5 1572.9,606.0 1573.1,606.4 1573.3,617.9 1573.7,586.8 1573.9,588.8 1574.1,585.4 1574.3,585.4 1574.7,564.9 1574.9,564.9 1575.1,564.4 1575.3,560.0 1575.7,571.1 1575.9,567.6 1576.1,567.3 1576.3,567.3 1576.7,586.1 1576.9,586.1 1577.1,579.1 1577.3,606.0 1577.7,569.8 1577.9,592.4 1578.1,589.6 1578.3,569.3 1578.7,613.3 1578.9,589.9 1579.1,581.1 1579.3,572.2 1579.7,606.8 1579.9,579.9 1580.1,575.3 1580.3,599.6 1580.7,568.3 1580.9,594.2 1581.1,602.3 1581.3,564.8 1581.7,608.4 1581.9,572.9 1582.1,577.2 1582.3,577.2 1582.7,614.4 1582.9,614.4 1583.1,598.6 1583.3,578.2 1583.7,605.4 1583.9,605.4" fill="none" stroke="#00ff00" stroke-width="3" stroke-linejoin="miter" stroke-miterlimit="2.5"/><polyline points="210.7,150.0 319.3,214.2 382.8,285.0 427.8,295.0 462.8,242.5 491.3,215.0 515.5,218.0 536.4,239.5 554.8,275.8 571.3,256.2 586.3,220.0 599.9,171.2 612.4,163.1 624.0,162.5 634.8,159.4 644.9,169.4 654.4,183.8 663.4,186.9 671.9,179.4 679.9,180.0 687.5,193.1 694.8,208.8 701.8,219.6 708.4,221.0 714.8,228.0 721.0,241.8 726.9,253.5 732.6,276.9 738.1,287.8 743.4,283.6 748.5,294.5 753.5,298.7 758.3,304.5 763.0,302.8 767.5,311.0 771.9,320.4 776.2,343.8 780.4,335.0 784.5,325.4 788.4,328.0 792.3,331.0 795.3,335.2 801.3,338.6 804.6,338.6 809.9,347.2 817.2,343.9 823.9,345.9 827.8,352.5 830.5,363.1 832.5,383.0 835.2,364.4 840.3,365.8 847.1,376.4 851.8,379.1 856.4,381.7 860.4,373.7 864.4,384.4 867.0,392.3 869.7,393.0 873.7,374.4 877.0,377.7 878.3,399.0 883.0,393.0 887.6,393.7 891.6,389.0 894.2,396.3 897.6,382.4 900.2,388.4 902.9,410.9 906.5,406.6 911.1,413.3 913.1,401.3 914.4,415.9 918.4,426.6 920.4,450.5 922.4,433.2 923.9,437.1 925.5,441.5 927.2,442.3 928.8,440.7 930.4,437.3 931.9,445.5 933.5,453.4 935.0,463.1 936.6,445.8 938.1,447.7 939.6,452.1 941.1,457.4 942.5,464.2 944.0,474.6 945.4,472.9 946.9,453.7 948.3,454.0 949.7,467.6 951.1,478.5 952.5,479.7 953.8,475.9 955.2,469.3 956.5,476.0 957.9,472.2 959.2,482.0 960.5,488.9 961.8,492.0 963.1,472.1 964.4,457.7 965.6,441.8 966.9,457.7 968.1,459.9 969.4,455.9 970.6,451.0 971.8,458.5 973.0,457.1 974.2,469.7 975.4,460.4 976.6,454.1 977.8,452.1 978.9,458.7 980.1,464.8 981.2,463.4 982.4,456.6 983.5,458.1 984.6,454.5 985.7,453.8 986.9,455.6 988.0,456.6 989.0,458.1 990.1,466.7 991.2,467.3 992.3,461.8 993.3,467.4 994.4,458.7 995.4,451.0 996.5,457.2 997.5,462.8 998.5,474.4 999.6,476.9 1000.6,484.7 1001.6,487.9 1002.6,487.5 1003.6,494.1 1004.6,505.4 1005.5,497.7 1006.5,475.5 1007.5,466.8 1008.5,472.4 1009.4,462.9 1010.4,460.7 1011.3,473.3 1012.3,480.3 1013.2,490.2 1014.1,498.9 1015.0,506.8 1016.0,488.1 1016.9,484.6 1017.8,493.4 1018.7,499.2 1019.6,489.7 1020.5,478.7 1021.4,471.9 1022.2,494.5 1023.1,498.7 1024.0,512.0 1024.9,519.2 1025.7,518.2 1026.6,508.8 1027.4,505.0 1028.3,493.2 1029.1,501.4 1030.0,503.1 1030.8,509.9 1031.6,501.4 1032.5,499.0 1033.3,500.7 1034.1,516.6 1034.9,506.4 1035.7,495.1 1036.5,495.5 1037.3,495.2 1038.1,513.0 1038.9,516.3 1039.7,508.1 1040.5,503.0 1041.3,496.3 1042.0,512.9 1042.8,511.6 1043.6,519.0 1044.4,505.3 1045.1,508.9 1045.9,514.4 1046.6,512.8 1047.4,508.2 1048.1,514.3 1048.9,510.9 1049.6,504.2 1050.4,500.6 1051.1,514.6 1051.8,511.6 1052.5,511.9 1053.3,510.0 1054.0,510.5 1054.7,512.3 1055.4,532.3 1056.1,530.3 1056.8,518.2 1057.5,512.9 1058.2,511.2 1058.9,502.6 1059.6,508.7 1060.3,505.1 1061.0,499.9 1061.7,496.6 1062.4,498.1 1063.1,505.7 1063.7,502.3 1064.4,497.0 1065.1,503.6 1065.7,502.7 1066.4,502.8 1067.1,509.9 1067.7,496.5 1068.4,486.7 1069.0,492.8 1069.7,490.4 1070.3,501.1 1071.0,500.4 1071.6,494.0 1072.3,495.8 1072.9,489.6 1073.5,483.6 1074.2,471.8 1074.8,469.4 1075.4,486.3 1076.1,500.2 1076.7,483.8 1077.3,484.5 1077.9,484.6 1078.5,489.3 1079.2,482.6 1079.8,486.6 1080.4,490.8 1081.0,486.3 1081.6,487.6 1082.2,490.2 1082.8,497.1 1083.4,500.8 1084.0,502.3 1084.6,498.0 1085.2,488.4 1085.7,492.9 1086.3,501.3 1086.9,502.5 1087.5,504.2 1088.1,491.2 1088.6,490.5 1089.2,494.9 1089.8,502.4 1090.4,497.3 1090.9,495.9 1091.5,503.4 1092.1,498.8 1092.6,495.2 1093.2,504.2 1093.7,504.7 1094.3,508.4 1094.9,507.8 1095.4,499.6 1096.0,499.8 1096.5,503.5 1097.1,508.5 1097.6,507.1 1098.1,510.5 1098.7,501.7 1099.2,505.3 1099.8,510.5 1100.3,492.7 1100.8,492.2 1101.4,507.7 1101.9,512.9 1102.4,514.5 1102.9,514.4 1103.5,512.3 1104.0,502.1 1104.5,503.9 1105.0,505.4 1105.5,492.9 1106.1,490.1 1106.6,498.6 1107.1,511.7 1107.6,509.0 1108.1,494.3 1108.6,495.6 1109.1,498.6 1109.6,503.7 1110.1,505.6 1110.6,502.4 1111.1,499.2 1111.6,512.6 1112.1,512.0 1112.6,497.9 1113.1,502.8 1113.6,512.6 1114.1,510.1 1114.6,507.5 1115.1,504.8 1115.6,511.8 1116.0,501.0 1116.5,512.7 1117.1,518.2 1117.3,518.2 1117.7,505.2 1117.9,514.8 1118.4,512.3 1118.9,501.7 1119.4,507.4 1119.9,514.8 1120.3,503.3 1120.8,494.2 1121.3,478.4 1121.7,485.1 1122.2,497.9 1122.7,504.1 1123.1,510.8 1123.6,516.9 1124.1,523.1 1124.3,520.6 1124.7,530.3 1124.9,530.3 1125.4,519.9 1125.9,515.2 1126.3,502.8 1126.8,508.9 1127.2,515.5 1127.7,513.6 1128.1,503.8 1128.6,501.3 1129.1,496.3 1129.3,496.3 1129.7,503.0 1129.9,500.1 1130.4,511.1 1130.8,510.9 1131.2,512.7 1131.7,512.5 1132.1,511.9 1132.3,512.9 1132.7,504.4 1132.9,504.4 1133.4,496.1 1133.8,510.3 1134.3,504.7 1134.7,512.2 1135.1,512.6 1135.3,512.6 1135.7,508.4 1135.9,508.4 1136.4,508.6 1136.8,507.9 1137.3,506.1 1137.7,505.5 1138.1,509.1 1138.3,510.2 1138.7,504.4 1138.9,504.4 1139.4,503.9 1139.8,494.4 1140.2,493.1 1140.6,490.4 1141.1,501.0 1141.3,501.0 1141.7,509.7 1141.9,509.2 1142.2,498.9 1142.6,507.2 1143.1,499.1 1143.3,499.1 1143.7,504.7 1143.9,504.7 1144.3,517.2 1144.7,515.1 1145.1,524.3 1145.3,524.3 1145.7,506.9 1145.9,506.9 1146.3,511.2 1146.7,515.1 1147.1,501.1 1147.3,500.2 1147.7,503.8 1147.9,503.8 1148.3,502.7 1148.7,506.6 1149.1,518.4 1149.3,518.4 1149.7,502.7 1149.9,502.7 1150.1,499.1 1150.3,496.2 1150.7,507.4 1150.9,507.4 1151.4,510.0 1151.8,532.1 1152.1,515.2 1152.3,515.2 1152.7,493.9 1152.9,493.9 1153.3,500.0 1153.7,506.1 1154.1,503.0 1154.3,503.0 1154.7,512.9 1154.9,512.9 1155.1,511.9 1155.3,511.9 1155.7,504.9 1155.9,504.9 1156.3,497.4 1156.7,490.8 1157.1,489.1 1157.3,489.1 1157.7,509.0 1157.9,509.0 1158.1,504.0 1158.3,498.8 1158.7,507.4 1158.9,507.4 1159.3,496.8 1159.6,491.7 1160.1,493.3 1160.3,493.3 1160.7,499.9 1160.9,499.9 1161.1,491.5 1161.3,490.5 1161.7,504.8 1161.9,504.8 1162.1,508.2 1162.3,508.2 1162.7,511.1 1162.9,511.1 1163.1,510.0 1163.3,517.4 1163.7,506.3 1163.9,506.3 1164.3,506.0 1164.7,514.7 1165.1,509.5 1165.3,509.5 1165.7,501.1 1165.9,501.1 1166.1,496.5 1166.3,496.5 1166.7,506.1 1166.9,504.6 1167.1,509.6 1167.3,509.6 1167.7,516.5 1167.9,513.1 1168.1,508.3 1168.3,507.6 1168.7,509.2 1168.9,509.2 1169.1,512.8 1169.3,512.8 1169.7,492.0 1169.9,494.6 1170.1,497.4 1170.3,497.4 1170.7,504.6 1170.9,503.1 1171.1,507.7 1171.3,507.7 1171.7,518.5 1171.9,511.0 1172.1,509.1 1172.3,509.1 1172.7,494.5 1172.9,494.5 1173.1,496.5 1173.3,508.7 1173.7,496.0 1173.9,496.0 1174.1,501.1 1174.3,501.1 1174.7,519.2 1174.9,509.8 1175.1,502.5 1175.3,502.5 1175.7,493.2 1175.9,493.2 1176.1,504.0 1176.3,508.0 1176.7,495.6 1176.9,495.6 1177.1,499.0 1177.3,499.0 1177.7,511.6 1177.9,503.1 1178.1,510.4 1178.3,517.6 1178.7,498.6 1178.9,498.6 1179.1,496.0 1179.3,496.0 1179.7,483.9 1179.9,483.9 1180.1,506.3 1180.3,506.5 1180.7,499.8 1180.9,499.8 1181.1,501.2 1181.3,501.2 1181.7,486.0 1181.9,486.0 1182.1,489.9 1182.3,489.9 1182.7,492.3 1182.9,492.3 1183.1,503.2 1183.3,503.2 1183.7,489.2 1183.9,498.8 1184.1,506.1 1184.3,512.7 1184.7,501.2 1184.9,501.2 1185.1,486.7 1185.3,486.7 1185.7,502.2 1185.9,502.2 1186.1,496.2 1186.3,496.2 1186.7,510.1 1186.9,510.1 1187.1,487.6 1187.3,482.9 1187.7,493.0 1187.9,493.0 1188.1,498.9 1188.3,500.8 1188.7,488.4 1188.9,498.1 1189.1,493.2 1189.3,493.2 1189.7,483.3 1189.9,492.7 1190.1,504.1 1190.3,510.3 1190.7,497.5 1190.9,497.5 1191.1,498.0 1191.3,490.1 1191.7,501.8 1191.9,501.8 1192.1,504.4 1192.3,504.4 1192.7,479.0 1192.9,479.0 1193.1,482.1 1193.3,502.2 1193.7,475.9 1193.9,475.9 1194.1,484.2 1194.3,484.2 1194.7,498.7 1194.9,498.7 1195.1,492.4 1195.3,492.4 1195.7,480.6 1195.9,481.3 1196.1,470.5 1196.3,470.5 1196.7,495.6 1196.9,495.6 1197.1,483.7 1197.3,483.7 1197.7,470.5 1197.9,474.4 1198.1,484.5 1198.3,496.2 1198.7,471.4 1198.9,471.4 1199.1,472.6 1199.3,472.6 1199.7,480.4 1199.9,480.4 1200.1,488.3 1200.3,501.1 1200.7,471.7 1200.9,471.7 1201.1,490.3 1201.3,490.3 1201.7,483.0 1201.9,483.0 1202.1,488.2 1202.3,488.2 1202.7,502.0 1202.9,502.0 1203.1,498.9 1203.3,499.4 1203.7,493.0 1203.9,493.3 1204.1,498.9 1204.3,500.0 1204.7,493.2 1204.9,493.2 1205.1,501.3 1205.3,501.3 1205.7,533.2 1205.9,533.2 1206.1,531.0 1206.3,535.7 1206.7,528.0 1206.9,528.0 1207.1,519.2 1207.3,519.2 1207.7,526.1 1207.9,526.1 1208.1,528.2 1208.3,528.2 1208.7,523.6 1208.9,524.8 1209.1,526.4 1209.3,545.1 1209.7,515.7 1209.9,515.7 1210.1,529.3 1210.3,523.7 1210.7,530.7 1210.9,530.7 1211.1,536.3 1211.3,536.3 1211.7,531.6 1211.9,531.6 1212.1,534.5 1212.3,546.6 1212.7,516.1 1212.9,516.1 1213.1,512.7 1213.3,512.7 1213.7,522.7 1213.9,522.7 1214.1,521.4 1214.3,521.4 1214.7,509.3 1214.9,509.3 1215.1,506.7 1215.3,506.7 1215.7,498.2 1215.9,498.2 1216.1,494.2 1216.3,486.0 1216.7,498.2 1216.9,498.2 1217.1,503.9 1217.3,503.9 1217.7,514.4 1217.9,511.2 1218.1,513.3 1218.3,506.1 1218.7,518.4 1218.9,518.4 1219.1,517.5 1219.3,521.9 1219.7,514.4 1219.9,519.5 1220.1,525.0 1220.3,524.2 1220.7,534.5 1220.9,534.5 1221.1,531.2 1221.3,531.2 1221.7,516.1 1221.9,518.1 1222.1,520.9 1222.3,536.4 1222.7,517.7 1222.9,517.7 1223.1,528.7 1223.3,530.6 1223.7,519.7 1223.9,527.2 1224.1,541.9 1224.3,528.3 1224.7,547.2 1224.9,547.2 1225.1,525.9 1225.3,525.9 1225.7,510.2 1225.9,522.4 1226.1,526.2 1226.3,526.2 1226.7,504.9 1226.9,520.1 1227.1,515.3 1227.3,515.3 1227.7,528.2 1227.9,519.9 1228.1,509.2 1228.3,509.2 1228.7,514.8 1228.9,510.9 1229.1,520.5 1229.3,520.5 1229.7,539.7 1229.9,539.7 1230.1,538.8 1230.3,538.8 1230.7,519.6 1230.9,535.1 1231.1,538.8 1231.3,538.8 1231.7,522.5 1231.9,522.5 1232.1,522.0 1232.3,517.0 1232.7,527.1 1232.9,527.1 1233.1,528.5 1233.3,537.5 1233.7,495.0 1233.9,495.0 1234.1,476.8 1234.3,476.8 1234.7,437.8 1234.9,452.1 1235.1,472.1 1235.3,472.1 1235.7,520.5 1235.9,520.5 1236.1,522.5 1236.3,547.5 1236.7,517.8 1236.9,517.8 1237.1,522.0 1237.3,522.0 1237.7,539.9 1237.9,539.9 1238.1,534.4 1238.3,536.8 1238.7,527.3 1238.9,529.1 1239.1,536.6 1239.3,536.6 1239.7,545.2 1239.9,538.4 1240.1,531.3 1240.3,524.0 1240.7,543.8 1240.9,543.8 1241.1,549.8 1241.3,549.8 1241.7,520.8 1241.9,520.8 1242.1,527.3 1242.3,527.3 1242.7,539.7 1242.9,538.6 1243.1,549.5 1243.3,549.5 1243.7,543.2 1243.9,543.2 1244.1,545.8 1244.3,534.4 1244.7,559.2 1244.9,559.2 1245.1,552.0 1245.3,552.0 1245.7,535.5 1245.9,535.5 1246.1,536.7 1246.3,550.8 1246.7,535.2 1246.9,535.2 1247.1,535.8 1247.3,532.3 1247.7,563.2 1247.9,563.2 1248.1,553.6 1248.3,553.6 1248.7,515.8 1248.9,515.8 1249.1,521.8 1249.3,521.8 1249.7,555.2 1249.9,555.2 1250.1,549.9 1250.3,545.4 1250.7,557.2 1250.9,557.2 1251.1,544.4 1251.3,540.6 1251.7,557.3 1251.9,550.2 1252.1,549.8 1252.3,564.1 1252.7,541.6 1252.9,541.6 1253.1,533.1 1253.3,556.3 1253.7,532.6 1253.9,532.6 1254.1,527.2 1254.3,527.2 1254.7,544.9 1254.9,544.9 1255.1,532.9 1255.3,532.9 1255.7,561.4 1255.9,546.6 1256.1,553.0 1256.3,553.0 1256.7,533.2 1256.9,534.8 1257.1,546.3 1257.3,534.1 1257.7,555.1 1257.9,552.7 1258.1,569.6 1258.3,569.6 1258.7,545.3 1258.9,560.9 1259.1,542.8 1259.3,542.8 1259.7,562.5 1259.9,556.9 1260.1,564.5 1260.3,576.2 1260.7,544.7 1260.9,544.7 1261.1,552.4 1261.3,552.4 1261.7,558.4 1261.9,553.7 1262.1,567.0 1262.3,567.0 1262.7,553.5 1262.9,563.0 1263.1,567.5 1263.3,555.3 1263.7,568.1 1263.9,559.3 1264.1,562.1 1264.3,567.3 1264.7,548.8 1264.9,548.8 1265.1,550.8 1265.3,558.3 1265.7,547.3 1265.9,547.3 1266.1,559.7 1266.3,557.6 1266.7,589.0 1266.9,575.0 1267.1,565.5 1267.3,551.3 1267.7,568.9 1267.9,568.9 1268.1,560.6 1268.3,550.5 1268.7,567.4 1268.9,562.1 1269.1,554.6 1269.3,554.6 1269.7,569.9 1269.9,569.9 1270.1,562.1 1270.3,552.0 1270.7,575.2 1270.9,575.2 1271.1,565.3 1271.3,552.5 1271.7,579.4 1271.9,579.4 1272.1,561.8 1272.3,539.2 1272.7,566.7 1272.9,566.7 1273.1,561.7 1273.3,572.7 1273.7,551.9 1273.9,551.9 1274.1,558.1 1274.3,571.9 1274.7,543.8 1274.9,552.8 1275.1,542.0 1275.3,542.0 1275.7,575.2 1275.9,555.4 1276.1,559.5 1276.3,565.1 1276.7,552.4 1276.9,562.8 1277.1,579.1 1277.3,579.1 1277.7,556.3 1277.9,557.5 1278.1,580.9 1278.3,580.9 1278.7,556.6 1278.9,556.6 1279.1,556.9 1279.3,551.9 1279.7,571.8 1279.9,567.9 1280.1,578.5 1280.3,578.5 1280.7,553.3 1280.9,562.6 1281.1,574.6 1281.3,582.7 1281.7,555.5 1281.9,564.7 1282.1,577.6 1282.3,567.7 1282.7,579.5 1282.9,579.5 1283.1,584.8 1283.3,584.8 1283.7,557.5 1283.9,582.8 1284.1,587.4 1284.3,587.4 1284.7,551.5 1284.9,575.0 1285.1,564.0 1285.3,556.8 1285.7,573.4 1285.9,573.4 1286.1,571.5 1286.3,572.0 1286.7,547.7 1286.9,560.7 1287.1,572.9 1287.3,572.9 1287.7,581.6 1287.9,580.7 1288.1,574.4 1288.3,564.2 1288.7,584.4 1288.9,584.4 1289.1,570.2 1289.3,570.2 1289.7,584.6 1289.9,575.9 1290.1,568.8 1290.3,568.8 1290.7,585.5 1290.9,581.1 1291.1,573.4 1291.3,568.0 1291.7,591.4 1291.9,591.4 1292.1,576.4 1292.3,589.8 1292.7,564.9 1292.9,564.9 1293.1,573.7 1293.3,573.7 1293.7,592.2 1293.9,574.9 1294.1,561.7 1294.3,561.7 1294.7,592.8 1294.9,577.4 1295.1,585.7 1295.3,603.4 1295.7,580.5 1295.9,580.5 1296.1,594.8 1296.3,594.8 1296.7,565.4 1296.9,577.6 1297.1,576.7 1297.3,574.0 1297.7,596.5 1297.9,577.9 1298.1,578.7 1298.3,588.3 1298.7,556.8 1298.9,576.8 1299.1,580.6 1299.3,576.5 1299.7,585.5 1299.9,585.5 1300.1,591.7 1300.3,591.7 1300.7,573.2 1300.9,573.2 1301.1,583.5 1301.3,583.5 1301.7,605.9 1301.9,589.6 1302.1,577.1 1302.3,577.1 1302.7,593.6 1302.9,587.8 1303.1,595.0 1303.3,595.0 1303.7,588.9 1303.9,588.9 1304.1,592.6 1304.3,610.0 1304.7,569.0 1304.9,576.0 1305.1,586.3 1305.3,593.8 1305.7,576.2 1305.9,580.7 1306.1,580.9 1306.3,571.0 1306.7,585.3 1306.9,583.0 1307.1,579.3 1307.3,575.0 1307.7,593.8 1307.9,593.8 1308.1,597.5 1308.3,597.5 1308.7,573.6 1308.9,581.5 1309.1,598.7 1309.3,599.6 1309.7,579.7 1309.9,588.9 1310.1,597.0 1310.3,597.0 1310.7,580.1 1310.9,580.1 1311.1,582.9 1311.3,585.6 1311.7,574.5 1311.9,584.7 1312.1,592.2 1312.3,571.4 1312.7,600.5 1312.9,589.3 1313.1,589.2 1313.3,579.2 1313.7,604.2 1313.9,591.2 1314.1,596.2 1314.3,596.2 1314.7,572.8 1314.9,592.9 1315.1,579.2 1315.3,579.2 1315.7,602.6 1315.9,595.7 1316.1,589.6 1316.3,589.6 1316.7,561.3 1316.9,584.3 1317.1,582.8 1317.3,574.6 1317.7,584.6 1317.9,584.4 1318.1,577.6 1318.3,590.9 1318.7,560.0 1318.9,566.4 1319.1,584.2 1319.3,567.2 1319.7,587.5 1319.9,587.5 1320.1,590.6 1320.3,590.6 1320.7,577.3 1320.9,578.3 1321.1,580.4 1321.3,588.3 1321.7,568.3 1321.9,577.6 1322.1,574.9 1322.3,570.2 1322.7,595.5 1322.9,595.5 1323.1,588.2 1323.3,578.6 1323.7,600.2 1323.9,600.2 1324.1,591.3 1324.3,579.8 1324.7,599.0 1324.9,591.2 1325.1,581.7 1325.3,588.7 1325.7,577.2 1325.9,578.9 1326.1,580.7 1326.3,589.4 1326.7,574.8 1326.9,580.3 1327.1,585.9 1327.3,600.0 1327.7,584.9 1327.9,599.2 1328.1,585.6 1328.3,591.1 1328.7,561.3 1328.9,586.8 1329.1,591.2 1329.3,572.4 1329.7,597.6 1329.9,594.1 1330.1,606.5 1330.3,606.5 1330.7,571.0 1330.9,578.2 1331.1,589.0 1331.3,596.1 1331.7,572.8 1331.9,572.8 1332.1,566.9 1332.3,566.9 1332.7,596.8 1332.9,594.0 1333.1,591.1 1333.3,598.4 1333.7,585.3 1333.9,585.3 1334.1,585.4 1334.3,585.4 1334.7,595.0 1334.9,593.2 1335.1,592.3 1335.3,597.6 1335.7,579.1 1335.9,579.1 1336.1,582.8 1336.3,603.1 1336.7,580.7 1336.9,594.2 1337.1,595.4 1337.3,585.4 1337.7,599.3 1337.9,596.4 1338.1,602.0 1338.3,593.3 1338.7,602.5 1338.9,602.5 1339.1,614.1 1339.3,614.1 1339.7,572.2 1339.9,575.5 1340.1,593.5 1340.3,600.0 1340.7,574.0 1340.9,597.1 1341.1,596.5 1341.3,611.7 1341.7,588.9 1341.9,603.4 1342.1,607.6 1342.3,612.9 1342.7,590.8 1342.9,590.8 1343.1,597.2 1343.3,605.7 1343.7,587.0 1343.9,589.7 1344.1,595.7 1344.3,604.9 1344.7,594.2 1344.9,596.6 1345.1,601.0 1345.3,603.4 1345.7,584.1 1345.9,584.1 1346.1,590.2 1346.3,593.8 1346.7,580.5 1346.9,590.0 1347.1,594.5 1347.3,574.2 1347.7,611.5 1347.9,605.6 1348.1,606.7 1348.3,588.3 1348.7,610.0 1348.9,592.7 1349.1,585.3 1349.3,578.1 1349.7,595.9 1349.9,595.9 1350.1,594.7 1350.3,584.1 1350.7,604.3 1350.9,603.8 1351.1,601.6 1351.3,621.1 1351.7,589.9 1351.9,599.1 1352.1,602.3 1352.3,606.1 1352.7,580.5 1352.9,580.5 1353.1,601.9 1353.3,616.7 1353.7,580.9 1353.9,593.6 1354.1,587.8 1354.3,587.8 1354.7,626.7 1354.9,615.1 1355.1,597.9 1355.3,600.6 1355.7,578.6 1355.9,595.1 1356.1,579.8 1356.3,579.8 1356.7,604.7 1356.9,603.3 1357.1,610.2 1357.3,610.7 1357.7,595.7 1357.9,607.9 1358.1,591.8 1358.3,613.0 1358.7,584.4 1358.9,597.9 1359.1,605.2 1359.3,587.9 1359.7,605.3 1359.9,588.0 1360.1,592.7 1360.3,589.2 1360.7,609.6 1360.9,609.6 1361.1,598.5 1361.3,598.5 1361.7,614.1 1361.9,614.1 1362.1,602.5 1362.3,618.9 1362.7,595.7 1362.9,597.5 1363.1,596.5 1363.3,579.9 1363.7,599.9 1363.9,599.9 1364.1,622.2 1364.3,624.3 1364.7,599.4 1364.9,601.1 1365.1,597.8 1365.3,594.2 1365.7,618.3 1365.9,597.4 1366.1,610.2 1366.3,621.2 1366.7,603.5 1366.9,610.7 1367.1,615.8 1367.3,615.8 1367.7,584.0 1367.9,607.7 1368.1,600.6 1368.3,594.9 1368.7,611.7 1368.9,611.7 1369.1,617.8 1369.3,619.2 1369.7,603.3 1369.9,617.4 1370.1,617.2 1370.3,602.1 1370.7,629.9 1370.9,612.2 1371.1,593.1 1371.3,621.9 1371.7,590.9 1371.9,614.7 1372.1,617.2 1372.3,591.1 1372.7,619.6 1372.9,605.3 1373.1,611.3 1373.3,623.5 1373.7,585.9 1373.9,588.8 1374.1,601.3 1374.3,619.6 1374.7,596.0 1374.9,596.0 1375.1,609.5 1375.3,592.9 1375.7,627.3 1375.9,607.0 1376.1,604.2 1376.3,604.2 1376.7,624.1 1376.9,609.1 1377.1,618.1 1377.3,618.7 1377.7,594.3 1377.9,594.3 1378.1,608.2 1378.3,597.3 1378.7,629.4 1378.9,629.4 1379.1,631.6 1379.3,631.6 1379.7,604.5 1379.9,621.1 1380.1,619.7 1380.3,619.7 1380.7,609.8 1380.9,615.5 1381.1,616.7 1381.3,623.5 1381.7,593.2 1381.9,622.8 1382.1,603.3 1382.3,602.8 1382.7,630.0 1382.9,606.1 1383.1,613.7 1383.3,620.2 1383.7,601.3 1383.9,612.7 1384.1,610.4 1384.3,623.2 1384.7,600.7 1384.9,608.2 1385.1,604.2 1385.3,604.2 1385.7,578.0 1385.9,578.0 1386.1,579.8 1386.3,579.8 1386.7,605.0 1386.9,605.0 1387.1,608.9 1387.3,589.8 1387.7,623.9 1387.9,614.1 1388.1,612.5 1388.3,606.7 1388.7,629.4 1388.9,622.3 1389.1,605.5 1389.3,600.1 1389.7,625.3 1389.9,625.3 1390.1,622.7 1390.3,622.7 1390.7,608.0 1390.9,613.8 1391.1,620.3 1391.3,606.4 1391.7,630.3 1391.9,629.7 1392.1,632.2 1392.3,635.0 1392.7,607.1 1392.9,616.5 1393.1,614.9 1393.3,603.6 1393.7,636.3 1393.9,636.3 1394.1,623.2 1394.3,635.6 1394.7,597.8 1394.9,609.2 1395.1,610.5 1395.3,630.7 1395.7,604.1 1395.9,611.4 1396.1,602.7 1396.3,602.7 1396.7,535.0 1396.9,540.6 1397.1,547.4 1397.3,547.4 1397.7,629.6 1397.9,629.6 1398.1,627.8 1398.3,612.8 1398.7,632.0 1398.9,615.2 1399.1,616.1 1399.3,630.0 1399.7,608.2 1399.9,614.6 1400.1,624.3 1400.3,606.3 1400.7,630.9 1400.9,630.9 1401.1,630.6 1401.3,632.9 1401.7,606.1 1401.9,606.1 1402.1,609.6 1402.3,600.8 1402.7,632.0 1402.9,632.0 1403.1,631.4 1403.3,639.0 1403.7,612.8 1403.9,627.8 1404.1,629.8 1404.3,629.8 1404.7,607.2 1404.9,619.6 1405.1,615.0 1405.3,640.3 1405.7,591.0 1405.9,591.0 1406.1,593.1 1406.3,593.1 1406.7,629.0 1406.9,614.3 1407.1,617.0 1407.3,615.9 1407.7,641.0 1407.9,629.3 1408.1,629.8 1408.3,632.6 1408.7,615.8 1408.9,617.5 1409.1,616.7 1409.3,611.4 1409.7,627.7 1409.9,617.1 1410.1,627.6 1410.3,653.3 1410.7,606.7 1410.9,611.2 1411.1,636.7 1411.3,612.7 1411.7,637.2 1411.9,612.9 1412.1,593.6 1412.3,593.6 1412.7,608.7 1412.9,601.4 1413.1,612.3 1413.3,602.6 1413.7,616.8 1413.9,604.4 1414.1,598.4 1414.3,598.4 1414.7,621.3 1414.9,621.3 1415.1,601.8 1415.3,623.1 1415.7,587.2 1415.9,587.2 1416.1,597.6 1416.3,597.6 1416.7,621.8 1416.9,612.5 1417.1,618.5 1417.3,618.9 1417.7,585.6 1417.9,612.8 1418.1,615.7 1418.3,596.5 1418.7,624.7 1418.9,609.3 1419.1,605.9 1419.3,625.2 1419.7,592.7 1419.9,592.7 1420.1,592.3 1420.3,605.9 1420.7,587.9 1420.9,588.3 1421.1,589.9 1421.3,591.4 1421.7,579.0 1421.9,583.3 1422.1,584.5 1422.3,584.5 1422.7,598.9 1422.9,588.9 1423.1,592.9 1423.3,592.9 1423.7,616.4 1423.9,604.6 1424.1,593.9 1424.3,584.1 1424.7,619.2 1424.9,604.6 1425.1,592.3 1425.3,621.7 1425.7,590.1 1425.9,607.3 1426.1,613.6 1426.3,626.8 1426.7,586.2 1426.9,604.4 1427.1,614.0 1427.3,626.8 1427.7,589.8 1427.9,601.6 1428.1,596.9 1428.3,590.9 1428.7,638.8 1428.9,638.8 1429.1,630.0 1429.3,630.0 1429.7,594.3 1429.9,598.8 1430.1,595.5 1430.3,591.0 1430.7,620.8 1430.9,602.8 1431.1,628.0 1431.3,628.0 1431.7,600.1 1431.9,611.9 1432.1,616.3 1432.3,619.9 1432.7,593.7 1432.9,607.2 1433.1,616.2 1433.3,595.3 1433.7,619.2 1433.9,605.8 1434.1,621.8 1434.3,599.7 1434.7,625.6 1434.9,625.6 1435.1,620.6 1435.3,612.9 1435.7,635.0 1435.9,630.7 1436.1,618.4 1436.3,642.0 1436.7,609.3 1436.9,609.3 1437.1,615.4 1437.3,638.4 1437.7,609.0 1437.9,630.4 1438.1,621.8 1438.3,615.0 1438.7,648.0 1438.9,626.7 1439.1,634.2 1439.3,631.0 1439.7,653.5 1439.9,637.0 1440.1,636.2 1440.3,630.1 1440.7,659.2 1440.9,657.5 1441.1,650.2 1441.3,666.8 1441.7,623.9 1441.9,623.9 1442.1,623.5 1442.3,623.5 1442.7,561.9 1442.9,561.9 1443.1,559.3 1443.3,559.3 1443.7,627.1 1443.9,627.1 1444.1,629.5 1444.3,629.5 1444.7,657.3 1444.9,648.9 1445.1,645.0 1445.3,639.3 1445.7,656.5 1445.9,640.9 1446.1,637.5 1446.3,667.4 1446.7,635.8 1446.9,650.8 1447.1,654.4 1447.3,638.6 1447.7,670.0 1447.9,653.5 1448.1,653.5 1448.3,676.0 1448.7,648.0 1448.9,648.0 1449.1,655.1 1449.3,669.8 1449.7,637.1 1449.9,650.0 1450.1,651.9 1450.3,647.2 1450.7,675.4 1450.9,675.4 1451.1,678.4 1451.3,678.4 1451.7,646.5 1451.9,647.1 1452.1,648.9 1452.3,648.9 1452.7,671.9 1452.9,657.6 1453.1,663.7 1453.3,651.0 1453.7,671.2 1453.9,671.2 1454.1,666.2 1454.3,650.1 1454.7,681.6 1454.9,670.9 1455.1,661.7 1455.3,650.8 1455.7,685.5 1455.9,685.5 1456.1,680.7 1456.3,680.7 1456.7,653.5 1456.9,665.3 1457.1,677.3 1457.3,652.2 1457.7,682.2 1457.9,674.8 1458.1,664.8 1458.3,661.5 1458.7,685.1 1458.9,679.3 1459.1,677.0 1459.3,683.1 1459.7,651.7 1459.9,662.4 1460.1,674.5 1460.3,683.3 1460.7,654.3 1460.9,655.7 1461.1,651.0 1461.3,648.7 1461.7,675.6 1461.9,671.2 1462.1,666.9 1462.3,650.5 1462.7,686.4 1462.9,652.1 1463.1,653.2 1463.3,653.2 1463.7,684.0 1463.9,662.8 1464.1,664.1 1464.3,654.0 1464.7,683.5 1464.9,671.2 1465.1,681.0 1465.3,688.5 1465.7,653.1 1465.9,669.4 1466.1,676.0 1466.3,685.0 1466.7,649.8 1466.9,673.4 1467.1,673.3 1467.3,686.9 1467.7,657.0 1467.9,657.0 1468.1,665.5 1468.3,685.4 1468.7,656.8 1468.9,678.3 1469.1,673.1 1469.3,691.7 1469.7,649.8 1469.9,650.4 1470.1,652.6 1470.3,659.4 1470.7,627.8 1470.9,627.8 1471.1,623.5 1471.3,623.5 1471.7,584.0 1471.9,584.0 1472.1,585.3 1472.3,585.3 1472.7,623.1 1472.9,620.3 1473.1,623.0 1473.3,623.0 1473.7,662.5 1473.9,662.5 1474.1,665.7 1474.3,643.7 1474.7,677.2 1474.9,650.3 1475.1,645.6 1475.3,645.6 1475.7,590.0 1475.9,590.0 1476.1,587.1 1476.3,570.0 1476.7,610.7 1476.9,610.7 1477.1,612.2 1477.3,612.2 1477.7,661.9 1477.9,660.3 1478.1,659.8 1478.3,637.6 1478.7,674.3 1478.9,660.0 1479.1,669.7 1479.3,638.6 1479.7,672.7 1479.9,643.8 1480.1,648.3 1480.3,643.4 1480.7,671.6 1480.9,660.0 1481.1,657.6 1481.3,669.4 1481.7,635.1 1481.9,650.0 1482.1,654.9 1482.3,635.1 1482.7,669.9 1482.9,641.3 1483.1,643.1 1483.3,677.3 1483.7,636.4 1483.9,656.6 1484.1,650.2 1484.3,632.4 1484.7,667.6 1484.9,667.6 1485.1,653.6 1485.3,676.9 1485.7,645.6 1485.9,645.6 1486.1,651.7 1486.3,671.5 1486.7,635.2 1486.9,635.2 1487.1,632.5 1487.3,663.4 1487.7,628.2 1487.9,651.4 1488.1,648.3 1488.3,661.5 1488.7,639.6 1488.9,643.2 1489.1,646.8 1489.3,662.4 1489.7,635.5 1489.9,635.5 1490.1,651.8 1490.3,657.8 1490.7,629.4 1490.9,643.0 1491.1,642.2 1491.3,634.5 1491.7,661.4 1491.9,649.9 1492.1,644.4 1492.3,638.4 1492.7,660.8 1492.9,653.4 1493.1,649.0 1493.3,642.3 1493.7,669.9 1493.9,648.4 1494.1,643.3 1494.3,670.2 1494.7,637.5 1494.9,655.7 1495.1,649.3 1495.3,662.0 1495.7,637.4 1495.9,647.1 1496.1,652.1 1496.3,671.1 1496.7,635.9 1496.9,657.0 1497.1,674.1 1497.3,674.1 1497.7,643.1 1497.9,666.4 1498.1,664.5 1498.3,637.7 1498.7,676.1 1498.9,669.5 1499.1,663.0 1499.3,650.3 1499.7,688.4 1499.9,677.3 1500.1,670.8 1500.3,682.0 1500.7,652.0 1500.9,656.5 1501.1,649.5 1501.3,649.5 1501.7,519.1 1501.9,519.1 1502.1,513.4 1502.3,488.7 1502.7,592.8 1502.9,592.8 1503.1,601.7 1503.3,601.7 1503.7,682.1 1503.9,682.1 1504.1,669.9 1504.3,679.5 1504.7,641.9 1504.9,659.7 1505.1,677.2 1505.3,653.9 1505.7,690.1 1505.9,683.4 1506.1,679.3 1506.3,681.6 1506.7,654.7 1506.9,670.4 1507.1,664.8 1507.3,683.6 1507.7,657.7 1507.9,665.1 1508.1,666.5 1508.3,685.6 1508.7,642.7 1508.9,642.7 1509.1,656.9 1509.3,647.5 1509.7,690.5 1509.9,666.8 1510.1,654.6 1510.3,665.6 1510.7,635.4 1510.9,635.4 1511.1,652.9 1511.3,669.4 1511.7,637.0 1511.9,637.0 1512.1,637.4 1512.3,637.4 1512.7,674.4 1512.9,650.7 1513.1,653.3 1513.3,662.9 1513.7,635.2 1513.9,650.2 1514.1,656.2 1514.3,637.7 1514.7,670.8 1514.9,665.0 1515.1,652.3 1515.3,625.8 1515.7,661.7 1515.9,651.5 1516.1,663.6 1516.3,638.1 1516.7,666.8 1516.9,653.3 1517.1,646.4 1517.3,639.6 1517.7,666.4 1517.9,663.1 1518.1,656.1 1518.3,633.6 1518.7,665.4 1518.9,651.0 1519.1,662.5 1519.3,643.5 1519.7,678.4 1519.9,653.6 1520.1,663.1 1520.3,674.9 1520.7,631.1 1520.9,631.1 1521.1,639.5 1521.3,638.9 1521.7,674.0 1521.9,649.4 1522.1,656.4 1522.3,680.4 1522.7,642.3 1522.9,652.4 1523.1,640.0 1523.3,634.5 1523.7,669.2 1523.9,661.5 1524.1,670.3 1524.3,670.3 1524.7,619.9 1524.9,648.7 1525.1,648.8 1525.3,637.9 1525.7,662.2 1525.9,646.2 1526.1,650.9 1526.3,668.8 1526.7,630.8 1526.9,648.6 1527.1,650.2 1527.3,667.3 1527.7,628.5 1527.9,661.8 1528.1,651.0 1528.3,633.0 1528.7,682.4 1528.9,682.4 1529.1,665.0 1529.3,642.0 1529.7,669.7 1529.9,654.8 1530.1,647.5 1530.3,675.5 1530.7,640.3 1530.9,650.8 1531.1,659.0 1531.3,643.0 1531.7,674.9 1531.9,663.9 1532.1,664.8 1532.3,664.8 1532.7,638.1 1532.9,658.1 1533.1,654.0 1533.3,665.5 1533.7,637.9 1533.9,637.9 1534.1,654.4 1534.3,670.6 1534.7,637.1 1534.9,646.2 1535.1,648.9 1535.3,648.9 1535.7,631.1 1535.9,631.4 1536.1,634.0 1536.3,634.0 1536.7,617.5 1536.9,619.3 1537.1,616.2 1537.3,621.1 1537.7,604.8 1537.9,607.8 1538.1,607.0 1538.3,607.9 1538.7,592.1 1538.9,595.9 1539.1,594.1 1539.3,594.1 1539.7,588.0 1539.9,592.1 1540.1,589.8 1540.3,589.6 1540.7,608.5 1540.9,605.9 1541.1,606.2 1541.3,606.2 1541.7,626.5 1541.9,625.1 1542.1,622.0 1542.3,617.0 1542.7,637.0 1542.9,637.0 1543.1,638.4 1543.3,636.0 1543.7,653.6 1543.9,650.2 1544.1,651.8 1544.3,675.4 1544.7,647.4 1544.9,665.0 1545.1,666.3 1545.3,680.0 1545.7,655.0 1545.9,668.7 1546.1,661.5 1546.3,686.4 1546.7,646.8 1546.9,665.2 1547.1,666.3 1547.3,673.8 1547.7,641.3 1547.9,656.4 1548.1,644.9 1548.3,639.0 1548.7,675.6 1548.9,646.1 1549.1,647.5 1549.3,641.7 1549.7,672.4 1549.9,662.7 1550.1,660.4 1550.3,677.2 1550.7,647.0 1550.9,658.8 1551.1,665.7 1551.3,650.5 1551.7,678.0 1551.9,663.4 1552.1,658.5 1552.3,685.7 1552.7,641.8 1552.9,652.6 1553.1,642.8 1553.3,636.0 1553.7,680.1 1553.9,680.1 1554.1,679.8 1554.3,684.7 1554.7,645.2 1554.9,673.0 1555.1,662.4 1555.3,679.7 1555.7,649.2 1555.9,672.4 1556.1,668.8 1556.3,652.5 1556.7,679.1 1556.9,664.8 1557.1,654.7 1557.3,647.0 1557.7,678.7 1557.9,669.6 1558.1,664.6 1558.3,645.6 1558.7,677.4 1558.9,677.4 1559.1,679.2 1559.3,679.2 1559.7,650.5 1559.9,672.5 1560.1,671.0 1560.3,675.1 1560.7,645.7 1560.9,658.7 1561.1,656.7 1561.3,680.8 1561.7,650.1 1561.9,665.2 1562.1,661.6 1562.3,679.4 1562.7,647.3 1562.9,655.7 1563.1,665.1 1563.3,638.8 1563.7,681.6 1563.9,662.2 1564.1,658.0 1564.3,636.8 1564.7,683.9 1564.9,666.1 1565.1,660.9 1565.3,673.9 1565.7,630.9 1565.9,630.9 1566.1,640.4 1566.3,668.9 1566.7,634.7 1566.9,643.1 1567.1,645.4 1567.3,645.5 1567.7,595.0 1567.9,595.0 1568.1,596.1 1568.3,596.1 1568.7,645.1 1568.9,644.9 1569.1,647.3 1569.3,639.3 1569.7,680.3 1569.9,663.5 1570.1,675.1 1570.3,679.7 1570.7,642.0 1570.9,663.2 1571.1,668.9 1571.3,685.5 1571.7,631.6 1571.9,654.1 1572.1,668.3 1572.3,637.9 1572.7,672.5 1572.9,661.0 1573.1,660.6 1573.3,665.0 1573.7,638.6 1573.9,650.6 1574.1,645.4 1574.3,653.4 1574.7,627.1 1574.9,650.4 1575.1,646.4 1575.3,658.8 1575.7,614.8 1575.9,628.5 1576.1,628.7 1576.3,641.0 1576.7,606.0 1576.9,629.8 1577.1,615.8 1577.3,634.6 1577.7,597.6 1577.9,620.2 1578.1,622.0 1578.3,630.7 1578.7,590.2 1578.9,599.1 1579.1,613.3 1579.3,600.9 1579.7,637.3 1579.9,619.9 1580.1,609.7 1580.3,592.1 1580.7,632.8 1580.9,613.7 1581.1,615.6 1581.3,632.3 1581.7,595.6 1581.9,617.9 1582.1,618.9 1582.3,637.7 1582.7,594.9 1582.9,624.6 1583.1,626.9 1583.3,606.5 1583.7,640.6 1583.9,640.6" fill="none" stroke="#0000ff" stroke-width="3" stroke-linejoin="miter" stroke-miterlimit="2.5"/><polyline points="210.7,136.8 319.3,208.0 382.8,277.5 427.8,293.0 462.8,241.2 491.3,211.8 515.5,219.5 536.4,255.0 554.8,287.5 571.3,272.5 586.3,225.0 599.9,190.0 612.4,172.5 624.0,183.8 634.8,176.2 644.9,173.1 654.4,186.2 663.4,175.0 671.9,190.0 679.9,180.6 687.5,196.9 694.8,203.8 701.8,206.9 708.4,223.0 714.8,240.0 721.0,240.1 726.9,246.8 732.6,261.9 738.1,271.9 743.4,293.6 748.5,281.9 753.5,293.0 758.3,305.4 763.0,301.0 767.5,297.0 771.9,307.0 776.2,327.1 780.4,321.0 784.5,315.4 788.4,328.8 792.3,327.0 796.6,323.3 803.3,347.2 806.6,335.9 809.9,338.6 813.9,347.8 817.2,345.2 821.2,346.5 825.9,365.8 828.5,357.8 832.5,356.5 838.5,365.8 843.8,353.8 847.1,365.8 851.1,375.1 854.4,389.7 859.1,368.4 862.4,377.7 864.4,384.4 866.4,375.1 869.7,381.0 873.7,377.7 878.3,395.0 881.6,389.7 884.3,382.4 889.6,401.6 893.6,395.0 897.2,413.3 901.2,408.0 903.8,402.7 908.5,415.9 913.1,423.9 917.1,415.9 921.8,417.9 923.9,440.1 925.5,450.0 927.2,438.9 928.8,433.7 930.4,445.6 931.9,458.7 933.5,453.3 935.0,438.1 936.6,432.8 938.1,450.4 939.6,453.5 941.1,456.4 942.5,459.2 944.0,455.3 945.4,453.2 946.9,447.5 948.3,454.6 949.7,458.9 951.1,465.0 952.5,464.0 953.8,485.7 955.2,492.4 956.5,477.4 957.9,468.7 959.2,464.1 960.5,462.1 961.8,466.4 963.1,457.2 964.4,468.9 965.6,461.5 966.9,458.5 968.1,464.1 969.4,451.6 970.6,463.4 971.8,465.6 973.0,481.8 974.2,474.2 975.4,479.5 976.6,475.4 977.8,461.7 978.9,469.4 980.1,472.9 981.2,483.5 982.4,482.3 983.5,464.4 984.6,450.1 985.7,451.5 986.9,474.4 988.0,478.0 989.0,481.0 990.1,496.9 991.2,496.2 992.3,501.7 993.3,508.3 994.4,507.1 995.4,491.9 996.5,473.1 997.5,482.3 998.5,488.4 999.6,502.0 1000.6,491.8 1001.6,479.6 1002.6,478.2 1003.6,490.0 1004.6,501.4 1005.5,502.4 1006.5,503.7 1007.5,495.5 1008.5,492.8 1009.4,487.7 1010.4,494.2 1011.3,501.4 1012.3,498.2 1013.2,500.2 1014.1,493.6 1015.0,492.6 1016.0,497.2 1016.9,498.6 1017.8,503.6 1018.7,505.6 1019.6,513.5 1020.5,502.2 1021.4,496.9 1022.2,493.7 1023.1,502.8 1024.0,508.3 1024.9,500.8 1025.7,505.8 1026.6,512.6 1027.4,507.6 1028.3,506.8 1029.1,516.8 1030.0,514.7 1030.8,544.0 1031.6,524.8 1032.5,522.9 1033.3,510.5 1034.1,507.5 1034.9,512.6 1035.7,507.1 1036.5,499.1 1037.3,517.7 1038.1,516.3 1038.9,514.9 1039.7,506.7 1040.5,517.9 1041.3,509.6 1042.0,506.5 1042.8,500.1 1043.6,507.1 1044.4,509.6 1045.1,511.4 1045.9,515.8 1046.6,516.4 1047.4,519.8 1048.1,509.2 1048.9,504.1 1049.6,512.3 1050.4,521.2 1051.1,526.8 1051.8,519.1 1052.5,502.5 1053.3,516.1 1054.0,525.9 1054.7,515.3 1055.4,508.8 1056.1,511.8 1056.8,509.1 1057.5,514.4 1058.2,514.4 1058.9,521.6 1059.6,514.4 1060.3,505.0 1061.0,513.1 1061.7,514.8 1062.4,503.3 1063.1,496.4 1063.7,488.3 1064.4,505.9 1065.1,497.2 1065.7,481.9 1066.4,484.2 1067.1,499.1 1067.7,508.0 1068.4,504.1 1069.0,502.8 1069.7,490.6 1070.3,489.8 1071.0,505.8 1071.6,506.1 1072.3,503.6 1072.9,507.6 1073.5,493.5 1074.2,495.7 1074.8,509.9 1075.4,515.2 1076.1,505.8 1076.7,509.6 1077.3,496.8 1077.9,497.7 1078.5,492.3 1079.2,483.6 1079.8,497.0 1080.4,504.7 1081.0,498.4 1081.6,500.6 1082.2,507.2 1082.8,489.4 1083.4,484.0 1084.0,489.7 1084.6,493.5 1085.2,511.0 1085.7,506.4 1086.3,495.9 1086.9,503.6 1087.5,524.8 1088.1,505.1 1088.6,499.2 1089.2,508.4 1089.8,512.8 1090.4,507.9 1090.9,497.6 1091.5,497.3 1092.1,509.5 1092.6,504.9 1093.2,497.3 1093.7,515.6 1094.3,516.7 1094.9,507.9 1095.4,506.8 1096.0,508.9 1096.5,501.4 1097.1,498.1 1097.6,506.2 1098.1,500.2 1098.7,507.0 1099.2,499.6 1099.8,506.2 1100.3,513.3 1100.8,522.2 1101.4,502.9 1101.9,495.5 1102.4,499.8 1102.9,499.0 1103.5,504.5 1104.0,514.6 1104.5,521.6 1105.0,524.2 1105.5,514.6 1106.1,534.8 1106.6,532.2 1107.1,508.6 1107.6,492.0 1108.1,505.4 1108.6,506.3 1109.1,493.0 1109.6,506.1 1110.1,507.9 1110.6,505.8 1111.1,516.7 1111.6,519.6 1112.1,510.1 1112.6,510.5 1113.1,504.8 1113.6,503.7 1114.1,511.4 1114.6,514.5 1115.1,503.1 1115.6,493.8 1116.0,507.6 1116.5,500.3 1117.1,512.9 1117.3,526.0 1117.7,512.7 1117.9,512.7 1118.4,498.8 1118.9,499.9 1119.4,517.7 1119.9,515.4 1120.3,518.0 1120.8,520.2 1121.3,512.7 1121.7,507.1 1122.2,496.6 1122.7,481.7 1123.1,492.7 1123.6,507.5 1124.1,511.3 1124.3,511.3 1124.7,514.5 1124.9,512.2 1125.4,514.7 1125.9,516.7 1126.3,506.1 1126.8,504.2 1127.2,500.8 1127.7,516.4 1128.1,515.7 1128.6,519.6 1129.1,528.0 1129.3,528.0 1129.7,515.9 1129.9,515.9 1130.4,515.2 1130.8,503.6 1131.2,512.9 1131.7,510.8 1132.1,502.7 1132.3,502.7 1132.7,517.9 1132.9,511.3 1133.4,515.4 1133.8,512.8 1134.3,522.4 1134.7,523.4 1135.1,505.4 1135.3,498.2 1135.7,510.0 1135.9,510.0 1136.4,518.3 1136.8,510.2 1137.3,508.0 1137.7,509.0 1138.1,490.2 1138.3,490.2 1138.7,500.8 1138.9,500.8 1139.4,510.4 1139.8,505.1 1140.2,501.5 1140.6,504.2 1141.1,500.3 1141.3,500.3 1141.7,508.0 1141.9,506.6 1142.2,506.8 1142.6,508.4 1143.1,518.4 1143.3,518.4 1143.7,515.3 1143.9,518.0 1144.3,516.1 1144.7,508.8 1145.1,516.4 1145.3,517.6 1145.7,515.2 1145.9,515.2 1146.3,509.3 1146.7,510.2 1147.1,522.9 1147.3,530.0 1147.7,512.1 1147.9,512.1 1148.3,514.2 1148.7,512.6 1149.1,519.0 1149.3,520.1 1149.7,515.7 1149.9,515.7 1150.1,491.1 1150.3,491.1 1150.7,502.9 1150.9,502.9 1151.4,507.6 1151.8,504.8 1152.1,507.0 1152.3,507.0 1152.7,522.6 1152.9,522.6 1153.3,493.1 1153.7,504.0 1154.1,513.9 1154.3,513.9 1154.7,506.3 1154.9,506.3 1155.1,498.3 1155.3,498.3 1155.7,518.0 1155.9,518.0 1156.3,522.4 1156.7,513.2 1157.1,505.6 1157.3,505.6 1157.7,511.3 1157.9,511.3 1158.1,515.9 1158.3,515.9 1158.7,507.4 1158.9,507.4 1159.3,509.2 1159.6,504.5 1160.1,518.2 1160.3,520.2 1160.7,505.7 1160.9,505.7 1161.1,510.0 1161.3,506.9 1161.7,519.8 1161.9,519.8 1162.1,520.5 1162.3,520.5 1162.7,513.8 1162.9,517.8 1163.1,508.7 1163.3,508.7 1163.7,503.9 1163.9,505.0 1164.3,508.1 1164.7,508.7 1165.1,510.3 1165.3,508.3 1165.7,518.1 1165.9,518.1 1166.1,519.9 1166.3,519.9 1166.7,500.1 1166.9,500.1 1167.1,516.1 1167.3,521.3 1167.7,509.3 1167.9,509.3 1168.1,500.9 1168.3,500.9 1168.7,519.5 1168.9,519.5 1169.1,500.3 1169.3,500.3 1169.7,509.7 1169.9,507.4 1170.1,504.3 1170.3,509.9 1170.7,502.1 1170.9,502.1 1171.1,513.1 1171.3,522.2 1171.7,513.0 1171.9,513.0 1172.1,500.0 1172.3,500.0 1172.7,491.5 1172.9,492.2 1173.1,496.5 1173.3,496.5 1173.7,518.6 1173.9,509.7 1174.1,498.6 1174.3,498.6 1174.7,495.3 1174.9,498.2 1175.1,502.4 1175.3,502.4 1175.7,519.1 1175.9,519.1 1176.1,506.3 1176.3,503.0 1176.7,514.1 1176.9,514.1 1177.1,525.4 1177.3,525.4 1177.7,509.7 1177.9,509.7 1178.1,511.3 1178.3,511.3 1178.7,515.2 1178.9,515.2 1179.1,511.1 1179.3,511.1 1179.7,498.0 1179.9,498.0 1180.1,505.6 1180.3,503.6 1180.7,517.9 1180.9,517.9 1181.1,510.5 1181.3,510.5 1181.7,500.5 1181.9,503.3 1182.1,504.2 1182.3,504.2 1182.7,513.1 1182.9,513.1 1183.1,495.4 1183.3,491.5 1183.7,508.5 1183.9,508.5 1184.1,510.6 1184.3,512.1 1184.7,509.9 1184.9,509.9 1185.1,512.4 1185.3,512.4 1185.7,503.2 1185.9,504.9 1186.1,499.2 1186.3,498.6 1186.7,511.7 1186.9,511.7 1187.1,509.6 1187.3,509.6 1187.7,491.1 1187.9,495.2 1188.1,510.0 1188.3,515.4 1188.7,501.4 1188.9,501.4 1189.1,501.3 1189.3,501.3 1189.7,525.4 1189.9,518.7 1190.1,516.9 1190.3,516.5 1190.7,517.4 1190.9,517.4 1191.1,513.2 1191.3,513.2 1191.7,506.8 1191.9,510.8 1192.1,514.1 1192.3,514.1 1192.7,499.8 1192.9,499.8 1193.1,510.8 1193.3,515.4 1193.7,496.9 1193.9,496.9 1194.1,498.4 1194.3,498.4 1194.7,517.3 1194.9,517.3 1195.1,515.0 1195.3,515.0 1195.7,503.9 1195.9,503.9 1196.1,498.3 1196.3,498.3 1196.7,515.7 1196.9,506.4 1197.1,501.2 1197.3,504.9 1197.7,497.8 1197.9,497.8 1198.1,499.8 1198.3,499.8 1198.7,487.1 1198.9,497.8 1199.1,502.4 1199.3,509.0 1199.7,495.2 1199.9,495.2 1200.1,489.6 1200.3,489.6 1200.7,469.7 1200.9,473.4 1201.1,488.7 1201.3,486.7 1201.7,503.5 1201.9,503.5 1202.1,508.4 1202.3,500.6 1202.7,510.3 1202.9,506.2 1203.1,508.2 1203.3,508.2 1203.7,498.0 1203.9,498.0 1204.1,505.0 1204.3,505.0 1204.7,501.5 1204.9,504.5 1205.1,511.5 1205.3,510.0 1205.7,517.3 1205.9,517.3 1206.1,515.8 1206.3,503.7 1206.7,519.2 1206.9,519.2 1207.1,511.5 1207.3,514.8 1207.7,510.9 1207.9,510.9 1208.1,526.8 1208.3,520.9 1208.7,531.1 1208.9,531.1 1209.1,524.9 1209.3,524.9 1209.7,512.3 1209.9,512.3 1210.1,509.5 1210.3,509.5 1210.7,531.5 1210.9,529.4 1211.1,528.8 1211.3,528.8 1211.7,513.1 1211.9,513.1 1212.1,519.4 1212.3,519.4 1212.7,528.5 1212.9,526.5 1213.1,529.3 1213.3,524.9 1213.7,534.4 1213.9,534.4 1214.1,523.9 1214.3,523.9 1214.7,539.4 1214.9,531.9 1215.1,530.6 1215.3,535.7 1215.7,509.9 1215.9,509.9 1216.1,509.7 1216.3,509.7 1216.7,538.6 1216.9,533.1 1217.1,523.0 1217.3,517.2 1217.7,527.9 1217.9,527.9 1218.1,519.1 1218.3,511.8 1218.7,528.3 1218.9,528.3 1219.1,531.8 1219.3,531.8 1219.7,514.3 1219.9,514.3 1220.1,523.2 1220.3,521.1 1220.7,532.1 1220.9,532.1 1221.1,523.1 1221.3,522.4 1221.7,536.8 1221.9,534.0 1222.1,519.2 1222.3,504.5 1222.7,538.6 1222.9,538.6 1223.1,540.2 1223.3,540.2 1223.7,523.6 1223.9,528.4 1224.1,534.9 1224.3,534.9 1224.7,523.7 1224.9,524.5 1225.1,528.2 1225.3,520.5 1225.7,530.1 1225.9,528.0 1226.1,529.9 1226.3,538.4 1226.7,522.7 1226.9,537.3 1227.1,537.9 1227.3,533.8 1227.7,542.9 1227.9,539.4 1228.1,541.4 1228.3,526.1 1228.7,544.7 1228.9,544.7 1229.1,553.7 1229.3,553.7 1229.7,526.8 1229.9,526.8 1230.1,519.3 1230.3,539.2 1230.7,518.8 1230.9,519.0 1231.1,515.1 1231.3,515.1 1231.7,536.3 1231.9,522.6 1232.1,528.5 1232.3,541.4 1232.7,518.3 1232.9,518.3 1233.1,513.5 1233.3,530.5 1233.7,502.1 1233.9,502.1 1234.1,486.7 1234.3,486.7 1234.7,451.3 1234.9,463.5 1235.1,479.6 1235.3,479.6 1235.7,524.4 1235.9,524.4 1236.1,521.4 1236.3,509.7 1236.7,549.0 1236.9,549.0 1237.1,530.4 1237.3,524.8 1237.7,546.4 1237.9,537.5 1238.1,527.9 1238.3,520.7 1238.7,542.0 1238.9,533.0 1239.1,527.1 1239.3,527.1 1239.7,544.1 1239.9,534.2 1240.1,538.6 1240.3,529.8 1240.7,542.2 1240.9,542.2 1241.1,549.9 1241.3,549.9 1241.7,523.8 1241.9,534.3 1242.1,534.5 1242.3,535.3 1242.7,527.0 1242.9,527.0 1243.1,541.0 1243.3,538.4 1243.7,546.6 1243.9,546.6 1244.1,539.2 1244.3,545.6 1244.7,529.0 1244.9,529.0 1245.1,525.3 1245.3,525.3 1245.7,534.8 1245.9,534.8 1246.1,543.2 1246.3,550.1 1246.7,537.5 1246.9,537.5 1247.1,536.0 1247.3,536.0 1247.7,544.8 1247.9,539.2 1248.1,546.7 1248.3,546.7 1248.7,527.9 1248.9,540.9 1249.1,543.2 1249.3,543.2 1249.7,531.6 1249.9,536.7 1250.1,540.9 1250.3,536.3 1250.7,541.8 1250.9,541.8 1251.1,540.5 1251.3,535.6 1251.7,549.4 1251.9,549.4 1252.1,547.5 1252.3,547.5 1252.7,530.9 1252.9,537.7 1253.1,522.4 1253.3,522.4 1253.7,546.2 1253.9,540.0 1254.1,529.4 1254.3,525.4 1254.7,542.1 1254.9,542.1 1255.1,539.1 1255.3,535.9 1255.7,548.2 1255.9,536.7 1256.1,545.2 1256.3,545.8 1256.7,534.0 1256.9,534.0 1257.1,529.2 1257.3,529.2 1257.7,514.4 1257.9,514.4 1258.1,511.1 1258.3,509.0 1258.7,520.9 1258.9,520.9 1259.1,524.9 1259.3,524.9 1259.7,539.5 1259.9,539.5 1260.1,545.9 1260.3,545.9 1260.7,560.2 1260.9,554.6 1261.1,556.6 1261.3,557.4 1261.7,534.7 1261.9,534.7 1262.1,553.3 1262.3,553.3 1262.7,543.6 1262.9,543.6 1263.1,547.4 1263.3,564.4 1263.7,546.2 1263.9,546.2 1264.1,549.7 1264.3,549.7 1264.7,564.0 1264.9,564.0 1265.1,565.7 1265.3,565.7 1265.7,539.2 1265.9,550.6 1266.1,546.0 1266.3,546.0 1266.7,557.8 1266.9,552.5 1267.1,561.1 1267.3,545.9 1267.7,572.0 1267.9,556.3 1268.1,547.7 1268.3,547.2 1268.7,564.0 1268.9,560.4 1269.1,550.5 1269.3,542.8 1269.7,570.6 1269.9,567.0 1270.1,558.1 1270.3,560.5 1270.7,544.4 1270.9,550.3 1271.1,555.5 1271.3,575.8 1271.7,554.6 1271.9,554.6 1272.1,547.6 1272.3,546.5 1272.7,559.9 1272.9,559.9 1273.1,558.9 1273.3,554.0 1273.7,571.5 1273.9,571.5 1274.1,567.3 1274.3,546.2 1274.7,570.2 1274.9,570.2 1275.1,571.2 1275.3,571.7 1275.7,567.7 1275.9,567.7 1276.1,563.3 1276.3,543.6 1276.7,571.9 1276.9,557.1 1277.1,554.9 1277.3,554.9 1277.7,572.5 1277.9,570.0 1278.1,566.1 1278.3,558.1 1278.7,574.1 1278.9,574.1 1279.1,572.7 1279.3,572.7 1279.7,554.5 1279.9,567.3 1280.1,557.8 1280.3,552.3 1280.7,562.4 1280.9,562.4 1281.1,562.8 1281.3,555.0 1281.7,575.8 1281.9,572.8 1282.1,562.9 1282.3,558.7 1282.7,586.9 1282.9,583.7 1283.1,582.6 1283.3,582.6 1283.7,553.0 1283.9,577.0 1284.1,579.2 1284.3,579.2 1284.7,557.3 1284.9,557.3 1285.1,560.4 1285.3,560.4 1285.7,579.5 1285.9,579.5 1286.1,563.1 1286.3,566.6 1286.7,558.5 1286.9,565.8 1287.1,566.4 1287.3,557.8 1287.7,577.0 1287.9,559.4 1288.1,577.8 1288.3,577.8 1288.7,556.7 1288.9,568.5 1289.1,573.0 1289.3,570.6 1289.7,584.3 1289.9,584.3 1290.1,592.5 1290.3,593.3 1290.7,575.9 1290.9,575.9 1291.1,567.5 1291.3,576.0 1291.7,561.5 1291.9,567.7 1292.1,570.9 1292.3,570.9 1292.7,561.1 1292.9,561.1 1293.1,563.5 1293.3,563.5 1293.7,583.9 1293.9,570.0 1294.1,574.3 1294.3,567.1 1294.7,586.4 1294.9,586.4 1295.1,586.5 1295.3,586.5 1295.7,564.9 1295.9,583.7 1296.1,584.3 1296.3,590.5 1296.7,571.7 1296.9,589.2 1297.1,577.0 1297.3,577.0 1297.7,559.2 1297.9,559.2 1298.1,563.1 1298.3,563.1 1298.7,577.3 1298.9,577.3 1299.1,589.7 1299.3,584.8 1299.7,597.2 1299.9,597.2 1300.1,596.5 1300.3,600.0 1300.7,564.2 1300.9,564.2 1301.1,565.8 1301.3,555.0 1301.7,590.3 1301.9,590.3 1302.1,583.6 1302.3,589.7 1302.7,573.7 1302.9,573.7 1303.1,585.8 1303.3,588.6 1303.7,572.2 1303.9,572.2 1304.1,575.9 1304.3,573.4 1304.7,583.0 1304.9,583.0 1305.1,585.4 1305.3,599.1 1305.7,573.2 1305.9,585.2 1306.1,594.7 1306.3,594.7 1306.7,578.4 1306.9,587.0 1307.1,579.0 1307.3,594.3 1307.7,575.9 1307.9,583.3 1308.1,584.1 1308.3,589.2 1308.7,562.6 1308.9,562.6 1309.1,564.7 1309.3,564.7 1309.7,583.6 1309.9,576.4 1310.1,582.3 1310.3,584.8 1310.7,558.7 1310.9,558.7 1311.1,567.8 1311.3,567.8 1311.7,596.7 1311.9,596.7 1312.1,591.0 1312.3,603.7 1312.7,569.3 1312.9,588.0 1313.1,583.7 1313.3,571.9 1313.7,583.8 1313.9,579.7 1314.1,584.5 1314.3,598.9 1314.7,574.5 1314.9,574.5 1315.1,578.3 1315.3,577.1 1315.7,585.3 1315.9,580.7 1316.1,588.8 1316.3,597.2 1316.7,581.1 1316.9,581.1 1317.1,580.0 1317.3,570.3 1317.7,593.3 1317.9,581.4 1318.1,574.0 1318.3,574.0 1318.7,594.2 1318.9,592.7 1319.1,585.9 1319.3,601.9 1319.7,580.5 1319.9,580.5 1320.1,597.7 1320.3,600.1 1320.7,583.4 1320.9,596.4 1321.1,585.7 1321.3,580.6 1321.7,602.8 1321.9,586.7 1322.1,592.8 1322.3,577.8 1322.7,596.8 1322.9,596.8 1323.1,603.8 1323.3,603.8 1323.7,576.1 1323.9,581.9 1324.1,589.0 1324.3,574.4 1324.7,592.6 1324.9,592.6 1325.1,582.3 1325.3,601.6 1325.7,572.4 1325.9,572.4 1326.1,571.4 1326.3,571.4 1326.7,591.6 1326.9,576.7 1327.1,597.9 1327.3,605.6 1327.7,576.9 1327.9,588.4 1328.1,580.9 1328.3,580.9 1328.7,595.6 1328.9,595.6 1329.1,588.2 1329.3,599.4 1329.7,584.3 1329.9,584.3 1330.1,597.0 1330.3,597.0 1330.7,578.7 1330.9,581.5 1331.1,579.4 1331.3,575.5 1331.7,609.1 1331.9,603.0 1332.1,587.1 1332.3,602.4 1332.7,579.8 1332.9,599.7 1333.1,600.0 1333.3,605.7 1333.7,584.3 1333.9,596.3 1334.1,585.8 1334.3,577.0 1334.7,600.2 1334.9,582.0 1335.1,583.7 1335.3,575.2 1335.7,596.5 1335.9,596.5 1336.1,587.3 1336.3,597.1 1336.7,582.6 1336.9,589.8 1337.1,584.9 1337.3,586.8 1337.7,573.8 1337.9,583.4 1338.1,586.5 1338.3,574.5 1338.7,599.9 1338.9,587.0 1339.1,588.7 1339.3,605.6 1339.7,576.6 1339.9,596.8 1340.1,597.7 1340.3,579.1 1340.7,611.9 1340.9,598.1 1341.1,588.8 1341.3,609.7 1341.7,580.6 1341.9,591.2 1342.1,596.3 1342.3,606.2 1342.7,575.7 1342.9,575.7 1343.1,580.3 1343.3,621.1 1343.7,578.4 1343.9,607.5 1344.1,605.0 1344.3,605.0 1344.7,563.6 1344.9,595.5 1345.1,582.4 1345.3,582.4 1345.7,605.0 1345.9,585.9 1346.1,586.6 1346.3,586.6 1346.7,613.8 1346.9,607.1 1347.1,596.9 1347.3,607.9 1347.7,582.5 1347.9,586.0 1348.1,580.9 1348.3,580.9 1348.7,563.0 1348.9,563.0 1349.1,564.9 1349.3,564.9 1349.7,584.8 1349.9,584.8 1350.1,583.5 1350.3,583.5 1350.7,610.6 1350.9,610.6 1351.1,596.3 1351.3,579.7 1351.7,597.9 1351.9,585.2 1352.1,600.1 1352.3,600.1 1352.7,573.2 1352.9,577.5 1353.1,586.7 1353.3,578.2 1353.7,601.6 1353.9,594.1 1354.1,606.1 1354.3,606.1 1354.7,586.2 1354.9,595.5 1355.1,597.6 1355.3,581.4 1355.7,606.0 1355.9,598.2 1356.1,590.4 1356.3,605.4 1356.7,574.8 1356.9,574.8 1357.1,590.1 1357.3,576.4 1357.7,610.9 1357.9,601.3 1358.1,597.3 1358.3,609.6 1358.7,586.1 1358.9,603.4 1359.1,593.9 1359.3,581.1 1359.7,629.4 1359.9,629.4 1360.1,607.8 1360.3,607.8 1360.7,579.8 1360.9,579.8 1361.1,582.0 1361.3,582.0 1361.7,602.3 1361.9,596.0 1362.1,604.0 1362.3,625.0 1362.7,588.2 1362.9,588.2 1363.1,576.2 1363.3,576.2 1363.7,623.2 1363.9,587.9 1364.1,585.0 1364.3,585.0 1364.7,617.4 1364.9,590.2 1365.1,600.6 1365.3,600.6 1365.7,584.5 1365.9,585.4 1366.1,581.0 1366.3,581.0 1366.7,565.0 1366.9,565.0 1367.1,564.0 1367.3,564.0 1367.7,554.5 1367.9,561.9 1368.1,564.4 1368.3,564.4 1368.7,581.0 1368.9,581.0 1369.1,585.9 1369.3,585.9 1369.7,602.5 1369.9,602.5 1370.1,603.9 1370.3,595.1 1370.7,615.0 1370.9,597.4 1371.1,604.7 1371.3,609.7 1371.7,577.7 1371.9,605.0 1372.1,612.0 1372.3,612.0 1372.7,586.4 1372.9,588.1 1373.1,614.2 1373.3,614.2 1373.7,591.2 1373.9,592.4 1374.1,592.2 1374.3,592.2 1374.7,565.5 1374.9,565.5 1375.1,567.8 1375.3,567.8 1375.7,586.0 1375.9,586.0 1376.1,592.8 1376.3,591.8 1376.7,617.8 1376.9,617.8 1377.1,611.5 1377.3,611.5 1377.7,596.9 1377.9,601.0 1378.1,607.3 1378.3,593.0 1378.7,611.0 1378.9,602.2 1379.1,610.5 1379.3,621.9 1379.7,596.6 1379.9,609.9 1380.1,614.3 1380.3,592.0 1380.7,620.3 1380.9,603.3 1381.1,606.5 1381.3,621.7 1381.7,596.7 1381.9,602.1 1382.1,611.9 1382.3,618.9 1382.7,588.7 1382.9,591.1 1383.1,597.1 1383.3,597.1 1383.7,621.1 1383.9,607.4 1384.1,606.5 1384.3,604.2 1384.7,634.2 1384.9,605.4 1385.1,618.2 1385.3,590.0 1385.7,619.3 1385.9,614.0 1386.1,620.6 1386.3,627.9 1386.7,594.5 1386.9,594.5 1387.1,600.1 1387.3,632.6 1387.7,592.3 1387.9,618.2 1388.1,605.3 1388.3,594.4 1388.7,617.3 1388.9,616.4 1389.1,607.2 1389.3,612.5 1389.7,594.7 1389.9,597.7 1390.1,595.6 1390.3,595.6 1390.7,632.5 1390.9,614.8 1391.1,589.2 1391.3,589.2 1391.7,618.9 1391.9,605.9 1392.1,600.1 1392.3,600.1 1392.7,628.4 1392.9,609.2 1393.1,620.7 1393.3,622.3 1393.7,607.1 1393.9,610.8 1394.1,607.1 1394.3,628.3 1394.7,605.6 1394.9,624.2 1395.1,624.8 1395.3,635.9 1395.7,598.6 1395.9,598.6 1396.1,599.5 1396.3,599.5 1396.7,537.0 1396.9,542.1 1397.1,548.4 1397.3,548.4 1397.7,632.1 1397.9,632.1 1398.1,631.5 1398.3,597.1 1398.7,631.9 1398.9,613.5 1399.1,603.4 1399.3,600.4 1399.7,620.5 1399.9,610.4 1400.1,620.4 1400.3,624.9 1400.7,601.7 1400.9,605.6 1401.1,611.6 1401.3,633.3 1401.7,607.9 1401.9,612.4 1402.1,602.2 1402.3,588.3 1402.7,638.4 1402.9,615.8 1403.1,614.9 1403.3,634.8 1403.7,594.8 1403.9,615.2 1404.1,636.8 1404.3,636.8 1404.7,605.5 1404.9,615.0 1405.1,624.9 1405.3,621.3 1405.7,638.3 1405.9,638.3 1406.1,625.7 1406.3,598.3 1406.7,632.1 1406.9,620.2 1407.1,616.5 1407.3,627.0 1407.7,605.0 1407.9,624.2 1408.1,620.8 1408.3,620.8 1408.7,589.7 1408.9,589.7 1409.1,589.6 1409.3,576.0 1409.7,591.8 1409.9,591.8 1410.1,595.0 1410.3,593.9 1410.7,618.7 1410.9,618.7 1411.1,620.2 1411.3,632.0 1411.7,605.5 1411.9,611.5 1412.1,618.7 1412.3,635.8 1412.7,603.3 1412.9,606.3 1413.1,612.6 1413.3,598.8 1413.7,641.8 1413.9,630.6 1414.1,617.4 1414.3,598.8 1414.7,634.2 1414.9,624.6 1415.1,634.4 1415.3,637.8 1415.7,606.1 1415.9,625.4 1416.1,618.0 1416.3,611.8 1416.7,634.6 1416.9,613.4 1417.1,607.6 1417.3,605.4 1417.7,634.4 1417.9,624.2 1418.1,609.0 1418.3,635.7 1418.7,607.5 1418.9,630.4 1419.1,614.9 1419.3,602.9 1419.7,638.1 1419.9,625.7 1420.1,633.8 1420.3,633.8 1420.7,602.8 1420.9,630.2 1421.1,633.2 1421.3,637.8 1421.7,603.9 1421.9,630.4 1422.1,612.6 1422.3,611.0 1422.7,633.6 1422.9,616.3 1423.1,611.0 1423.3,599.5 1423.7,632.6 1423.9,616.9 1424.1,617.7 1424.3,610.0 1424.7,639.3 1424.9,639.3 1425.1,628.1 1425.3,609.3 1425.7,635.9 1425.9,635.9 1426.1,636.7 1426.3,636.7 1426.7,600.9 1426.9,618.0 1427.1,612.2 1427.3,635.6 1427.7,606.1 1427.9,607.8 1428.1,630.1 1428.3,639.7 1428.7,611.4 1428.9,630.1 1429.1,634.1 1429.3,646.3 1429.7,618.2 1429.9,623.2 1430.1,626.4 1430.3,610.6 1430.7,642.2 1430.9,624.5 1431.1,623.5 1431.3,637.2 1431.7,608.3 1431.9,608.4 1432.1,618.0 1432.3,618.0 1432.7,646.7 1432.9,640.3 1433.1,638.1 1433.3,638.1 1433.7,617.3 1433.9,626.6 1434.1,639.0 1434.3,642.5 1434.7,611.1 1434.9,611.1 1435.1,607.3 1435.3,607.3 1435.7,643.2 1435.9,637.3 1436.1,635.2 1436.3,645.8 1436.7,609.4 1436.9,609.4 1437.1,626.0 1437.3,626.0 1437.7,651.8 1437.9,634.4 1438.1,635.9 1438.3,625.6 1438.7,653.3 1438.9,628.8 1439.1,620.4 1439.3,620.4 1439.7,645.6 1439.9,637.6 1440.1,638.7 1440.3,643.6 1440.7,624.5 1440.9,633.9 1441.1,626.5 1441.3,626.5 1441.7,658.4 1441.9,644.0 1442.1,638.6 1442.3,623.9 1442.7,656.7 1442.9,633.3 1443.1,638.9 1443.3,614.1 1443.7,662.4 1443.9,645.4 1444.1,653.7 1444.3,659.9 1444.7,631.8 1444.9,631.8 1445.1,629.5 1445.3,629.5 1445.7,654.5 1445.9,632.4 1446.1,633.1 1446.3,633.1 1446.7,570.0 1446.9,570.0 1447.1,572.6 1447.3,572.6 1447.7,629.2 1447.9,629.2 1448.1,635.8 1448.3,635.6 1448.7,663.6 1448.9,640.5 1449.1,648.3 1449.3,667.4 1449.7,641.1 1449.9,648.4 1450.1,652.0 1450.3,637.7 1450.7,672.1 1450.9,647.5 1451.1,654.4 1451.3,637.0 1451.7,664.5 1451.9,658.4 1452.1,657.6 1452.3,675.7 1452.7,650.0 1452.9,659.1 1453.1,647.9 1453.3,670.0 1453.7,645.2 1453.9,656.1 1454.1,651.8 1454.3,672.4 1454.7,649.5 1454.9,649.5 1455.1,653.6 1455.3,681.8 1455.7,639.4 1455.9,655.1 1456.1,671.2 1456.3,681.0 1456.7,646.9 1456.9,657.8 1457.1,663.9 1457.3,649.4 1457.7,682.9 1457.9,665.2 1458.1,679.0 1458.3,679.0 1458.7,649.6 1458.9,671.7 1459.1,678.0 1459.3,678.0 1459.7,644.4 1459.9,649.3 1460.1,647.2 1460.3,647.2 1460.7,625.5 1460.9,625.5 1461.1,624.3 1461.3,621.0 1461.7,639.1 1461.9,637.1 1462.1,636.4 1462.3,636.4 1462.7,658.4 1462.9,657.1 1463.1,660.7 1463.3,681.5 1463.7,656.8 1463.9,666.2 1464.1,669.9 1464.3,673.4 1464.7,638.0 1464.9,664.5 1465.1,658.3 1465.3,671.3 1465.7,648.6 1465.9,648.6 1466.1,649.3 1466.3,649.3 1466.7,615.8 1466.9,615.8 1467.1,616.4 1467.3,616.4 1467.7,577.3 1467.9,577.3 1468.1,577.6 1468.3,577.6 1468.7,545.8 1468.9,545.8 1469.1,544.6 1469.3,544.6 1469.7,581.4 1469.9,581.4 1470.1,581.4 1470.3,581.4 1470.7,611.7 1470.9,611.7 1471.1,612.3 1471.3,612.3 1471.7,643.5 1471.9,641.1 1472.1,644.8 1472.3,644.8 1472.7,659.3 1472.9,659.3 1473.1,677.4 1473.3,646.7 1473.7,679.6 1473.9,659.5 1474.1,657.6 1474.3,666.9 1474.7,634.2 1474.9,646.8 1475.1,638.9 1475.3,640.9 1475.7,599.2 1475.9,599.2 1476.1,596.7 1476.3,582.4 1476.7,618.1 1476.9,618.1 1477.1,621.6 1477.3,621.6 1477.7,666.3 1477.9,655.4 1478.1,665.0 1478.3,643.7 1478.7,674.6 1478.9,645.9 1479.1,640.5 1479.3,675.0 1479.7,623.4 1479.9,644.4 1480.1,655.3 1480.3,662.8 1480.7,627.1 1480.9,649.0 1481.1,644.6 1481.3,633.5 1481.7,674.0 1481.9,659.3 1482.1,661.9 1482.3,665.5 1482.7,637.1 1482.9,661.9 1483.1,654.3 1483.3,627.1 1483.7,662.4 1483.9,655.7 1484.1,658.8 1484.3,666.3 1484.7,642.3 1484.9,642.7 1485.1,641.7 1485.3,641.7 1485.7,621.5 1485.9,621.6 1486.1,619.5 1486.3,619.5 1486.7,595.1 1486.9,595.1 1487.1,594.0 1487.3,594.0 1487.7,566.8 1487.9,566.8 1488.1,566.0 1488.3,566.0 1488.7,593.3 1488.9,593.3 1489.1,595.1 1489.3,593.3 1489.7,626.0 1489.9,626.0 1490.1,625.2 1490.3,625.2 1490.7,653.4 1490.9,653.4 1491.1,654.9 1491.3,674.8 1491.7,649.1 1491.9,654.3 1492.1,667.8 1492.3,681.3 1492.7,656.4 1492.9,660.2 1493.1,672.6 1493.3,637.6 1493.7,687.3 1493.9,678.0 1494.1,672.5 1494.3,645.8 1494.7,690.0 1494.9,680.0 1495.1,664.1 1495.3,659.5 1495.7,692.3 1495.9,692.3 1496.1,677.8 1496.3,679.1 1496.7,645.3 1496.9,668.1 1497.1,674.7 1497.3,657.8 1497.7,689.0 1497.9,661.2 1498.1,667.3 1498.3,686.2 1498.7,656.3 1498.9,660.2 1499.1,665.7 1499.3,667.5 1499.7,639.2 1499.9,639.2 1500.1,636.0 1500.3,636.0 1500.7,599.4 1500.9,599.4 1501.1,599.2 1501.3,599.2 1501.7,576.0 1501.9,590.3 1502.1,590.3 1502.3,590.3 1502.7,628.7 1502.9,628.7 1503.1,630.1 1503.3,630.1 1503.7,666.7 1503.9,664.9 1504.1,666.5 1504.3,653.8 1504.7,680.5 1504.9,680.5 1505.1,667.6 1505.3,656.1 1505.7,693.7 1505.9,671.0 1506.1,677.3 1506.3,650.9 1506.7,702.9 1506.9,680.3 1507.1,669.9 1507.3,669.9 1507.7,645.3 1507.9,647.5 1508.1,643.7 1508.3,644.4 1508.7,622.2 1508.9,622.2 1509.1,621.6 1509.3,621.6 1509.7,644.6 1509.9,644.6 1510.1,647.8 1510.3,645.5 1510.7,671.0 1510.9,671.0 1511.1,674.4 1511.3,649.7 1511.7,691.5 1511.9,664.3 1512.1,659.4 1512.3,685.1 1512.7,644.8 1512.9,671.7 1513.1,662.5 1513.3,678.9 1513.7,650.7 1513.9,664.6 1514.1,662.9 1514.3,687.4 1514.7,656.8 1514.9,674.5 1515.1,678.4 1515.3,688.7 1515.7,651.0 1515.9,676.1 1516.1,664.1 1516.3,652.2 1516.7,685.0 1516.9,680.8 1517.1,687.2 1517.3,687.2 1517.7,660.6 1517.9,684.6 1518.1,672.0 1518.3,653.0 1518.7,694.0 1518.9,677.1 1519.1,693.4 1519.3,693.4 1519.7,658.5 1519.9,681.5 1520.1,677.1 1520.3,649.7 1520.7,694.4 1520.9,672.4 1521.1,677.8 1521.3,661.1 1521.7,696.1 1521.9,696.1 1522.1,687.1 1522.3,658.4 1522.7,690.3 1522.9,674.0 1523.1,686.5 1523.3,686.5 1523.7,652.3 1523.9,683.6 1524.1,694.9 1524.3,698.6 1524.7,644.4 1524.9,659.2 1525.1,663.5 1525.3,685.5 1525.7,659.3 1525.9,659.5 1526.1,657.9 1526.3,657.9 1526.7,629.9 1526.9,629.9 1527.1,627.5 1527.3,628.2 1527.7,603.2 1527.9,603.2 1528.1,602.9 1528.3,603.0 1528.7,576.3 1528.9,576.3 1529.1,577.0 1529.3,577.0 1529.7,599.9 1529.9,599.9 1530.1,603.8 1530.3,601.3 1530.7,627.3 1530.9,627.3 1531.1,624.4 1531.3,624.4 1531.7,647.2 1531.9,647.2 1532.1,651.2 1532.3,633.1 1532.7,675.7 1532.9,657.7 1533.1,664.6 1533.3,675.8 1533.7,650.0 1533.9,659.1 1534.1,657.3 1534.3,670.7 1534.7,635.6 1534.9,651.7 1535.1,651.3 1535.3,673.5 1535.7,630.5 1535.9,665.7 1536.1,642.8 1536.3,675.8 1536.7,637.3 1536.9,649.3 1537.1,648.8 1537.3,648.8 1537.7,636.1 1537.9,636.5 1538.1,636.5 1538.3,637.2 1538.7,620.0 1538.9,620.5 1539.1,625.3 1539.3,626.7 1539.7,619.9 1539.9,623.1 1540.1,629.1 1540.3,626.3 1540.7,643.9 1540.9,643.9 1541.1,641.4 1541.3,636.8 1541.7,651.7 1541.9,651.2 1542.1,652.9 1542.3,642.9 1542.7,678.0 1542.9,666.5 1543.1,675.8 1543.3,651.0 1543.7,682.9 1543.9,675.9 1544.1,671.9 1544.3,651.6 1544.7,684.0 1544.9,679.6 1545.1,674.9 1545.3,692.9 1545.7,641.9 1545.9,672.5 1546.1,689.2 1546.3,660.4 1546.7,689.5 1546.9,679.9 1547.1,674.2 1547.3,650.9 1547.7,688.6 1547.9,676.7 1548.1,675.8 1548.3,697.2 1548.7,667.6 1548.9,682.7 1549.1,680.1 1549.3,698.3 1549.7,660.8 1549.9,674.4 1550.1,679.1 1550.3,669.1 1550.7,694.5 1550.9,676.3 1551.1,674.7 1551.3,661.7 1551.7,692.9 1551.9,676.1 1552.1,667.3 1552.3,701.0 1552.7,650.7 1552.9,683.5 1553.1,678.5 1553.3,694.2 1553.7,665.8 1553.9,674.8 1554.1,683.9 1554.3,699.8 1554.7,659.6 1554.9,673.4 1555.1,679.6 1555.3,692.9 1555.7,662.1 1555.9,682.8 1556.1,679.2 1556.3,662.0 1556.7,696.6 1556.9,682.2 1557.1,686.7 1557.3,696.3 1557.7,671.3 1557.9,673.4 1558.1,661.5 1558.3,661.5 1558.7,699.2 1558.9,688.7 1559.1,677.7 1559.3,654.7 1559.7,699.3 1559.9,680.8 1560.1,675.2 1560.3,664.0 1560.7,694.3 1560.9,670.8 1561.1,676.7 1561.3,696.5 1561.7,658.9 1561.9,667.1 1562.1,663.9 1562.3,700.8 1562.7,663.4 1562.9,696.1 1563.1,685.4 1563.3,657.7 1563.7,686.6 1563.9,659.9 1564.1,680.4 1564.3,692.7 1564.7,667.3 1564.9,682.5 1565.1,670.2 1565.3,651.7 1565.7,701.1 1565.9,684.7 1566.1,675.7 1566.3,704.5 1566.7,658.1 1566.9,690.2 1567.1,677.9 1567.3,691.9 1567.7,659.6 1567.9,667.5 1568.1,667.8 1568.3,683.8 1568.7,645.6 1568.9,669.3 1569.1,667.6 1569.3,654.2 1569.7,690.0 1569.9,659.4 1570.1,654.0 1570.3,687.9 1570.7,648.8 1570.9,659.3 1571.1,659.7 1571.3,677.0 1571.7,644.7 1571.9,654.2 1572.1,656.9 1572.3,677.2 1572.7,639.8 1572.9,667.4 1573.1,662.7 1573.3,670.5 1573.7,638.3 1573.9,648.9 1574.1,650.9 1574.3,658.2 1574.7,631.1 1574.9,639.3 1575.1,648.2 1575.3,656.8 1575.7,614.1 1575.9,637.0 1576.1,633.3 1576.3,643.8 1576.7,608.5 1576.9,630.6 1577.1,631.1 1577.3,631.1 1577.7,597.6 1577.9,597.6 1578.1,601.1 1578.3,601.1 1578.7,585.0 1578.9,585.1 1579.1,585.1 1579.3,585.1 1579.7,571.0 1579.9,579.8 1580.1,583.5 1580.3,579.7 1580.7,602.1 1580.9,601.9 1581.1,601.8 1581.3,627.4 1581.7,586.3 1581.9,604.6 1582.1,616.4 1582.3,596.7 1582.7,634.5 1582.9,634.5 1583.1,624.3 1583.3,611.3 1583.7,625.8 1583.9,614.7" fill="none" stroke="#ff0000" stroke-width="3" stroke-linejoin="miter" stroke-miterlimit="2.5"/>
<rect x="1102" y="152" width="467" height="108" fill="#000"/><rect x="1096.5" y="148.5" width="469" height="109" fill="#fff" stroke="#000" stroke-width="1"/><path d="M1113 166.5H1195" stroke="#ff0000" stroke-width="3"/><path d="M1113 202.5H1195" stroke="#0000ff" stroke-width="3"/><path d="M1113 239.5H1195" stroke="#00ff00" stroke-width="3"/>
</g>
<text transform="translate(1213,174.0) scale(1,1.045)" font-size="23">H1:ISI-GND_STS_ITMY_X_DQ</text><text transform="translate(1213,210.0) scale(1,1.045)" font-size="23">H1:ISI-GND_STS_ITMY_Y_DQ</text><text transform="translate(1213,247.0) scale(1,1.045)" font-size="23">H1:ISI-GND_STS_ITMY_Z_DQ</text>
<text transform="translate(125.5,87.5) scale(1,1.045)" font-size="35">Power spectrum</text><text transform="translate(221.5,755) scale(1,1.045)" font-size="28">10<tspan dy="-13.5" font-size="19">−2</tspan></text><text transform="translate(584.5,755) scale(1,1.045)" font-size="28">10<tspan dy="-13.5" font-size="19">−1</tspan></text><text transform="translate(970.5,755) scale(1,1.045)" font-size="28" text-anchor="middle">1</text><text transform="translate(1331,755) scale(1,1.045)" font-size="28" text-anchor="middle">10</text><text transform="translate(137,237.5) scale(1,1.045)" font-size="28">10<tspan dy="-13.5" font-size="19">3</tspan></text><text transform="translate(137,342.5) scale(1,1.045)" font-size="28">10<tspan dy="-13.5" font-size="19">2</tspan></text><text transform="translate(180.5,444.8) scale(1,1.045)" font-size="28" text-anchor="end">10</text><text transform="translate(181,550.2) scale(1,1.045)" font-size="28" text-anchor="end">1</text><text transform="translate(128.5,657.7) scale(1,1.045)" font-size="28">10<tspan dy="-13.5" font-size="19">−1</tspan></text><text transform="translate(896,799) scale(1,1.045)" font-size="32" text-anchor="middle">Frequency (Hz)</text><text transform="translate(93,591) rotate(-90) scale(1,1.045)" font-size="34">Magnitude (nm/Hz<tspan dy="-15" font-size="22">1/2</tspan><tspan dy="15" font-size="34">)</tspan></text><text transform="translate(62,852) scale(1,1.045)" font-size="30">T0=12/01/2023 23:59:19</text><text transform="translate(803,852) scale(1,1.045)" font-size="30">Avg=13</text><text transform="translate(1646,852) scale(1,1.045)" font-size="30" text-anchor="end">BW=0.0117187</text>
</svg>
</body></html>
